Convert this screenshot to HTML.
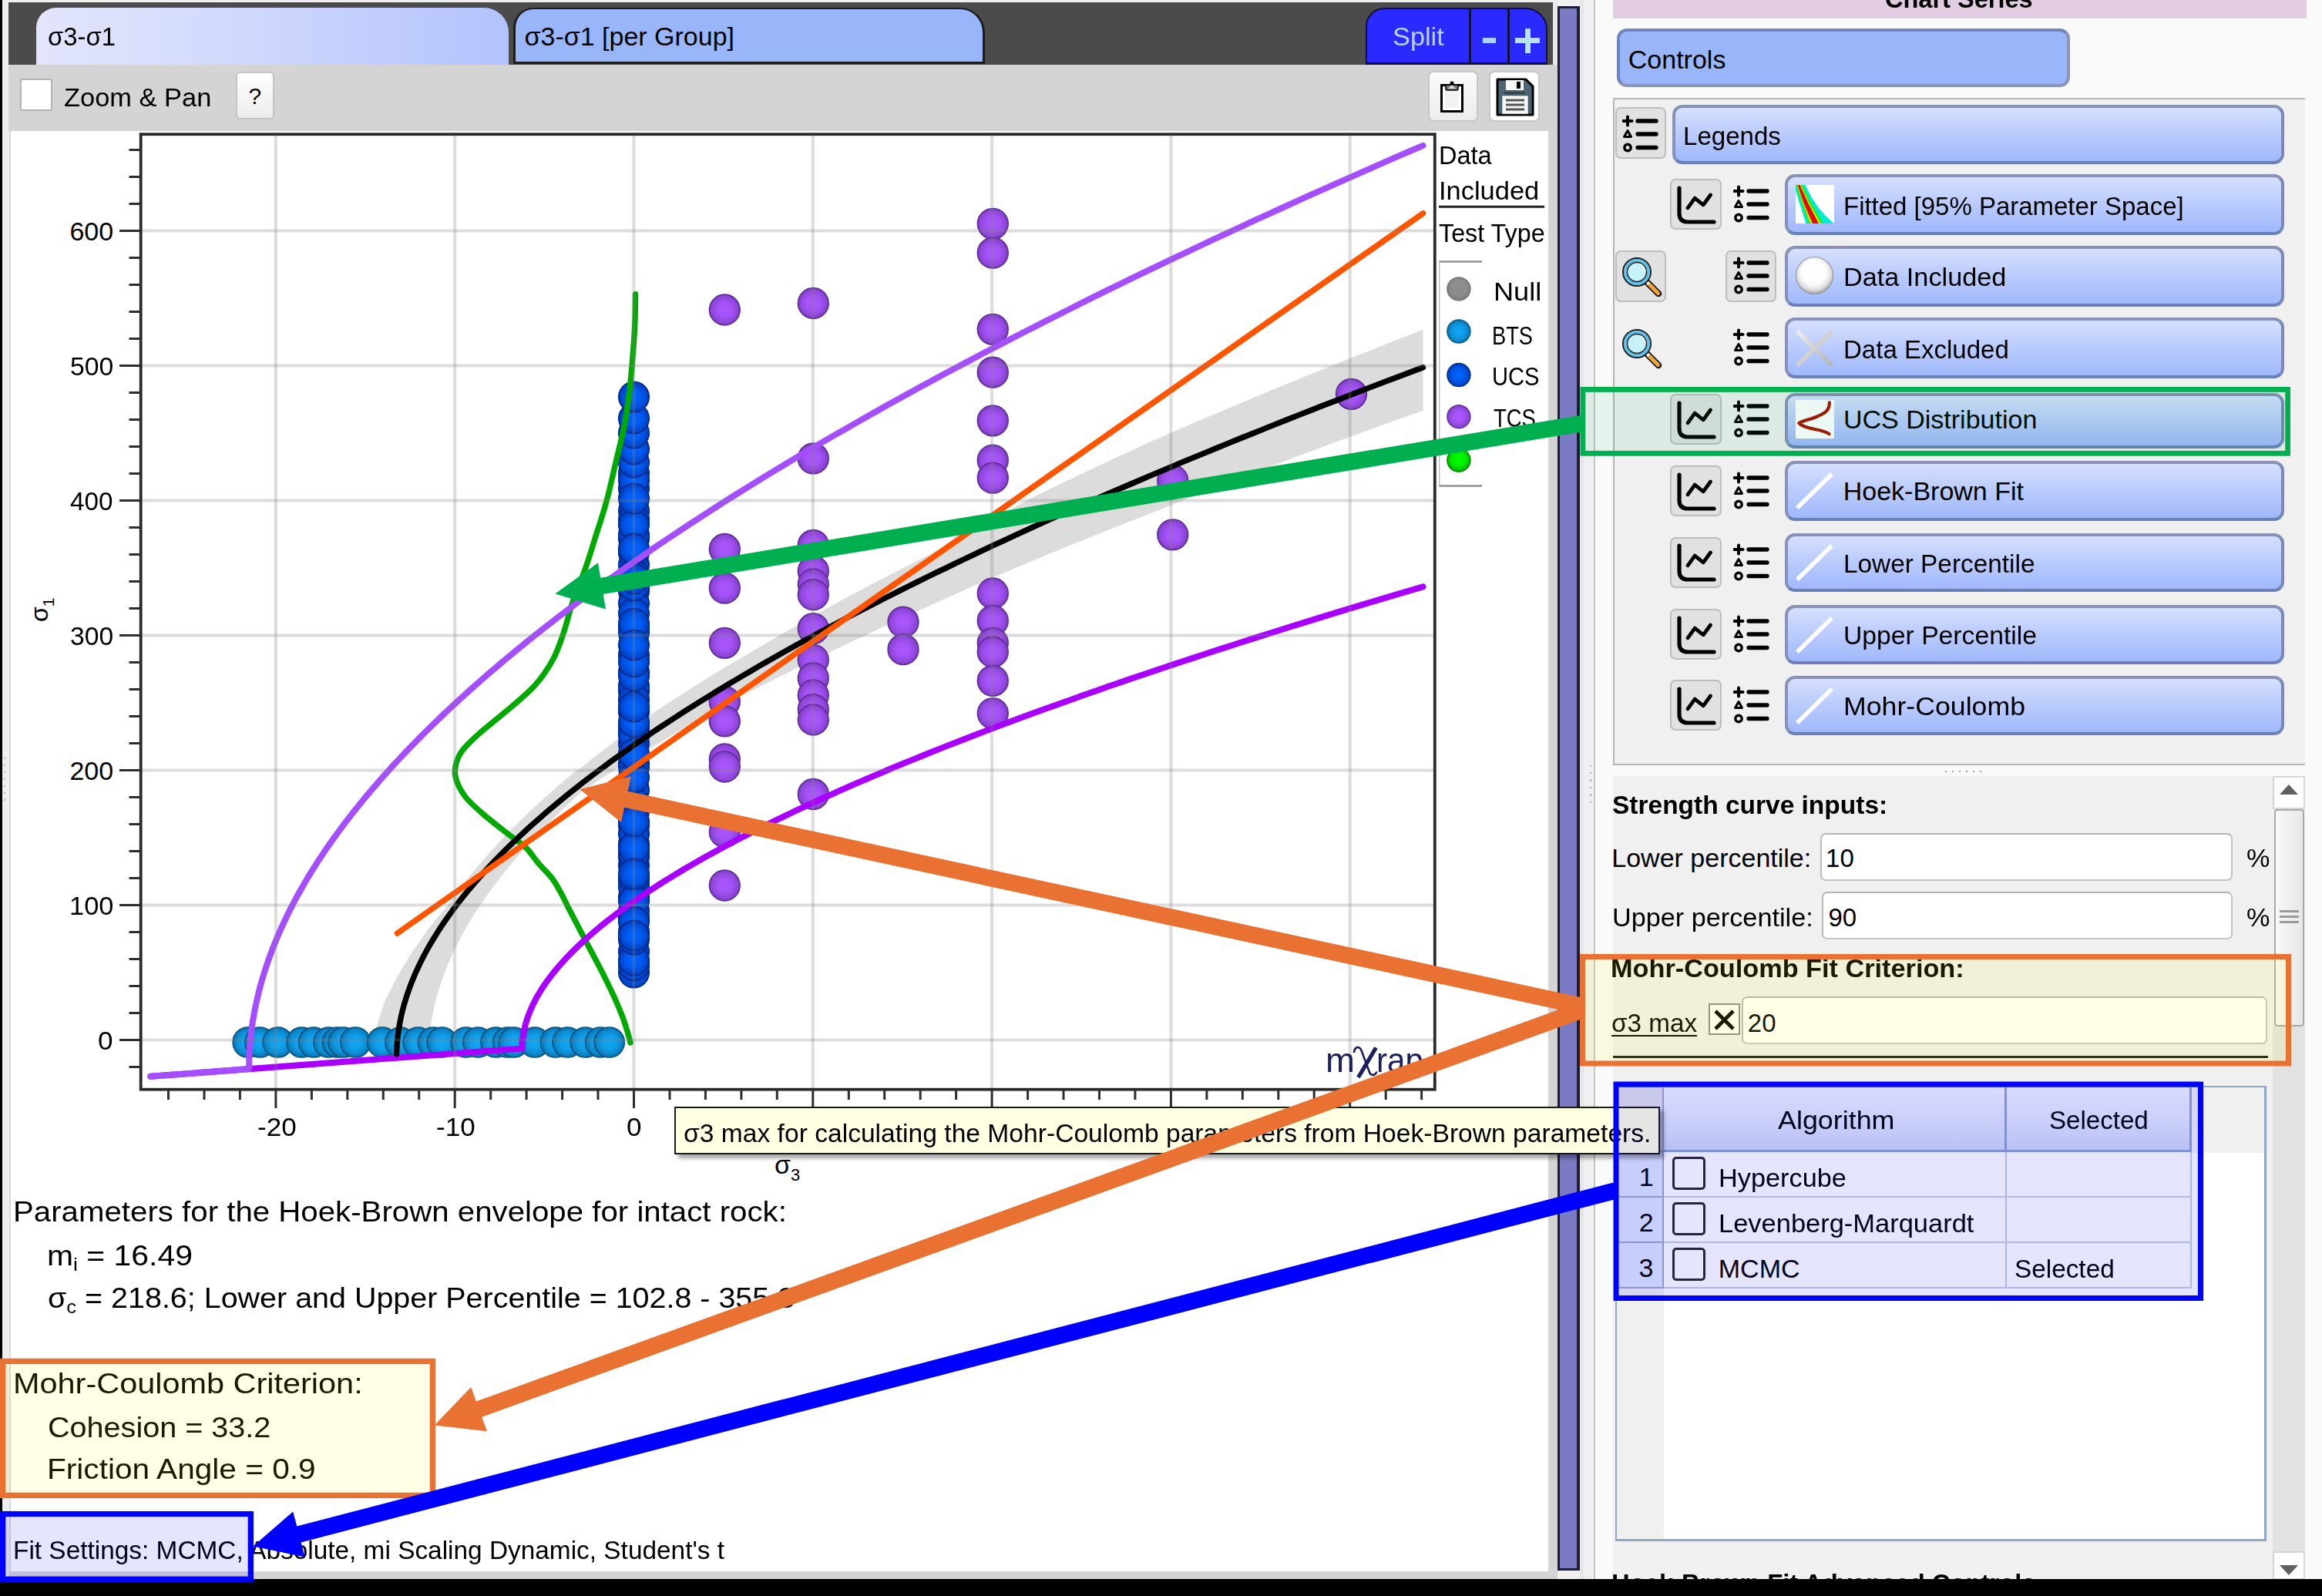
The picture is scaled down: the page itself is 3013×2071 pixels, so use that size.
<!DOCTYPE html>
<html><head><meta charset="utf-8"><title>mXrap</title>
<style>
html,body{margin:0;padding:0;background:#f0f0f0;}
body{width:3013px;height:2071px;overflow:hidden;position:relative;font-family:"Liberation Sans",sans-serif;}
.a{position:absolute;box-sizing:border-box;}
.t{position:absolute;white-space:nowrap;line-height:1;display:block;}
.bb{position:absolute;box-sizing:border-box;border:4px solid #8792b6;border-bottom-color:#6a80b8;border-right-color:#7888b8;border-radius:13px;background:linear-gradient(#d6e0fd,#bccdfd 45%,#a0b8fc);}
.gb{position:absolute;box-sizing:border-box;border:2px solid #bdbdbd;border-radius:7px;background:#e1e1e1;}
.inp{position:absolute;box-sizing:border-box;border:2px solid #c4c4c4;border-top-color:#b4b4b4;border-left-color:#bababa;border-radius:7px;background:#fff;}
</style></head><body>
<div class="a" style="left:0.0px;top:0.0px;width:3013.0px;height:2071.0px;background:#f0f0f0;"></div>
<div class="a" style="left:0.0px;top:0.0px;width:4.0px;height:2071.0px;background:#000;"></div>
<div class="a" style="left:3.0px;top:0.0px;width:12.5px;height:2049.0px;background:#efefef;border-right:4px solid #d8d8d8;"></div>
<div class="a" style="left:12.0px;top:0.0px;width:2003.0px;height:4.0px;background:#f0f0f0;"></div>
<div class="a" style="left:11.0px;top:3.0px;width:2004.0px;height:81.0px;background:#4b4b4b;"></div>
<div class="a" style="left:47.0px;top:10.0px;width:613.0px;height:74.0px;border-radius:26px 32px 0 0;background:linear-gradient(90deg,#e3e5fc,#cfd8fc 45%,#b2c2fc);"></div>
<span class="t" style="left:61.6px;transform-origin:0 0;top:30.2px;font-size:34px;color:#000;transform:scaleX(0.9659);">σ3-σ1</span>
<div class="a" style="left:666.0px;top:10.0px;width:612.0px;height:73.0px;border-radius:26px 32px 0 0;background:#9ab6fb;border:3px solid #1c1c1c;border-bottom:3px solid #1c1c1c;border-top-width:2px;"></div>
<span class="t" style="left:680.5px;transform-origin:0 0;top:30.2px;font-size:34px;color:#000;">σ3-σ1 [per Group]</span>
<div class="a" style="left:1772.0px;top:10.0px;width:236.0px;height:74.0px;border-radius:24px 28px 0 0;background:#2a2aff;border:2px solid #10103a;border-bottom-width:3px;"></div>
<div class="a" style="left:1906.0px;top:11.0px;width:3.0px;height:71.0px;background:#10103a;"></div>
<div class="a" style="left:1956.0px;top:11.0px;width:3.0px;height:71.0px;background:#10103a;"></div>
<span class="t" style="left:1807.4px;transform-origin:0 0;top:31.1px;font-size:33px;color:#b6d4f6;transform:scaleX(1.0400);">Split</span>
<div class="a" style="left:1924.0px;top:49.0px;width:17.0px;height:7.0px;background:#aad8f0;"></div>
<div class="a" style="left:1966.0px;top:49.0px;width:32.0px;height:7.0px;background:#b6e4ee;"></div>
<div class="a" style="left:1978.5px;top:36.5px;width:7.0px;height:32.0px;background:#b6e4ee;"></div>
<div class="a" style="left:11.0px;top:84.0px;width:2004.0px;height:87.0px;background:#d4d4d4;"></div>
<div class="a" style="left:26.0px;top:102.0px;width:42.0px;height:42.0px;background:#fff;border:2px solid #b4b4b4;border-radius:3px;"></div>
<span class="t" style="left:83.0px;transform-origin:0 0;top:110.1px;font-size:33px;color:#000;transform:scaleX(1.0430);">Zoom &amp; Pan</span>
<div class="a" style="left:306.0px;top:93.0px;width:50.0px;height:62.0px;border:2px solid #c4c4c4;border-radius:6px;background:linear-gradient(#fff,#ececec);"></div>
<span class="t" style="left:322.6px;transform-origin:0 0;top:109.6px;font-size:30px;color:#000;">?</span>
<div class="a" style="left:1853.0px;top:92.0px;width:65.0px;height:66.0px;border:2px solid #c6c6c6;border-radius:7px;background:linear-gradient(#fbfbfb,#ececec);"></div>
<div class="a" style="left:1932.0px;top:92.0px;width:66.0px;height:66.0px;border:2px solid #c6c6c6;border-radius:7px;background:#fff;"></div>
<svg class="a" style="left:1865px;top:102px" width="40" height="48" viewBox="0 0 40 48">
<rect x="5.5" y="8.5" width="27" height="34" fill="#fff" stroke="#000" stroke-width="3"/>
<rect x="10" y="13" width="18" height="25" fill="#f2f2f2"/>
<path d="M11,8 L11,13 Q11,15 13,15 L25,15 Q27,15 27,13 L27,8 Z" fill="#777" stroke="#000" stroke-width="1.5"/>
<path d="M14,13 L19,8 L24,13 Z" fill="#ddd"/>
<circle cx="19" cy="6" r="2.5" fill="#000"/>
</svg>
<svg class="a" style="left:1940px;top:100px" width="52" height="52" viewBox="0 0 52 52">
<path d="M3,3 L40,3 L49,12 L49,49 L3,49 Z" fill="#4d6675" stroke="#000" stroke-width="3" stroke-linejoin="round"/>
<rect x="14" y="4" width="23" height="13" fill="#f4f6f7"/>
<rect x="28" y="6" width="5" height="9" fill="#000"/>
<rect x="12" y="19" width="27" height="3" fill="#33454f"/>
<rect x="9" y="24" width="34" height="24" fill="#f4f6f7"/>
<rect x="9" y="24" width="34" height="24" fill="none" stroke="#2c3a42" stroke-width="1" opacity=".5"/>
<rect x="14" y="28.5" width="24" height="3" fill="#555"/>
<rect x="14" y="34.5" width="24" height="3" fill="#555"/>
<rect x="14" y="40.5" width="24" height="3" fill="#555"/>
</svg>
<div class="a" style="left:14.0px;top:170.0px;width:1995.0px;height:1869.0px;background:#fff;"></div>
<div class="a" style="left:11.0px;top:2039.0px;width:2004.0px;height:10.0px;background:#d4d4d4;"></div>
<div class="a" style="left:2015.0px;top:3.0px;width:6.0px;height:81.0px;background:#e8e8e8;"></div>
<div class="a" style="left:2009.0px;top:84.0px;width:12.0px;height:1965.0px;background:#d4d4d4;"></div>
<div class="a" style="left:2021.0px;top:8.0px;width:29.0px;height:2030.0px;background:#7b7bc3;border:3px solid #1c1c3a;border-left-width:3px;border-right-width:4px;"></div>
<div class="a" style="left:2050.0px;top:0.0px;width:5.0px;height:2049.0px;background:#e6e6e6;"></div>
<div class="a" style="left:2068.0px;top:0.0px;width:2.0px;height:2049.0px;background:#c4c4c4;"></div>
<div class="a" style="left:2070.0px;top:0.0px;width:943.0px;height:2049.0px;background:#fafafa;"></div>
<svg class="a" style="left:0;top:0" width="2013" height="1560" viewBox="0 0 2013 1560">
<defs>
<radialGradient id="gT" cx="50%" cy="50%" r="50%"><stop offset="0" stop-color="#aa57ff"/><stop offset="0.45" stop-color="#a453f6"/><stop offset="0.8" stop-color="#9147dc"/><stop offset="1" stop-color="#7a3abf"/></radialGradient>
<radialGradient id="gU" cx="50%" cy="50%" r="50%"><stop offset="0" stop-color="#0064ff"/><stop offset="0.45" stop-color="#005cf4"/><stop offset="0.8" stop-color="#004ad4"/><stop offset="1" stop-color="#0038b0"/></radialGradient>
<radialGradient id="gB" cx="50%" cy="50%" r="50%"><stop offset="0" stop-color="#10a8f6"/><stop offset="0.45" stop-color="#0f9fea"/><stop offset="0.8" stop-color="#0c88cc"/><stop offset="1" stop-color="#0a6ca8"/></radialGradient>
<radialGradient id="gN" cx="50%" cy="45%" r="55%"><stop offset="0" stop-color="#8e8e8e"/><stop offset="0.6" stop-color="#8c8c8c"/><stop offset="1" stop-color="#7c7c7c"/></radialGradient>
<radialGradient id="gG" cx="50%" cy="45%" r="55%"><stop offset="0" stop-color="#00ff00"/><stop offset="0.55" stop-color="#00f000"/><stop offset="1" stop-color="#00a800"/></radialGradient>
<clipPath id="cp"><rect x="184" y="176" width="1676" height="1236"/></clipPath>
</defs>
<rect x="182.7" y="174.2" width="1679.1" height="1239.5" fill="#fff"/>
<g clip-path="url(#cp)">
<polygon points="486.0,1352.0 488.5,1331.4 499.0,1300.0 514.0,1270.0 533.0,1238.0 556.0,1205.0 583.2,1172.1 587.1,1166.5 591.1,1160.9 595.2,1155.3 599.4,1149.7 603.8,1144.1 608.2,1138.5 612.7,1132.9 617.4,1127.3 622.1,1121.6 627.0,1116.0 631.9,1110.3 637.0,1104.7 642.1,1099.0 647.4,1093.3 652.8,1087.6 658.2,1081.9 663.8,1076.2 669.5,1070.5 675.3,1064.8 681.2,1059.1 687.2,1053.3 693.3,1047.6 699.5,1041.9 705.8,1036.1 712.2,1030.3 718.7,1024.6 725.3,1018.8 732.1,1013.0 738.9,1007.2 745.8,1001.4 752.8,997.3 761.9,989.9 771.0,982.6 780.2,975.4 789.3,968.4 798.4,961.4 807.5,954.5 816.6,947.8 825.7,941.1 834.8,934.5 843.9,928.0 853.1,921.6 862.2,915.6 871.3,909.6 880.4,903.7 889.5,897.9 898.6,892.1 907.7,886.4 916.9,880.7 926.0,875.1 935.1,869.6 944.2,864.1 953.3,858.7 962.4,853.3 971.5,847.9 980.7,842.6 989.8,837.2 998.9,831.8 1008.0,826.5 1017.1,821.2 1026.2,815.9 1035.3,810.7 1044.5,805.5 1053.6,800.3 1062.7,795.2 1071.8,790.1 1080.9,785.1 1090.0,780.1 1099.1,775.1 1108.3,770.3 1117.4,765.4 1126.5,760.6 1135.6,755.9 1144.7,751.1 1153.8,746.4 1162.9,741.7 1172.0,737.1 1181.2,732.4 1190.3,727.8 1199.4,723.3 1208.5,718.7 1217.6,713.6 1226.7,708.4 1235.8,703.2 1245.0,698.0 1254.1,692.9 1263.2,687.7 1272.3,682.6 1281.4,677.5 1290.5,672.5 1299.6,667.4 1308.8,662.4 1317.9,657.4 1327.0,652.4 1336.1,647.5 1345.2,642.8 1354.3,638.4 1363.4,634.0 1372.6,629.6 1381.7,625.2 1390.8,620.9 1399.9,616.5 1409.0,612.2 1418.1,607.9 1427.2,603.6 1436.4,599.4 1445.5,595.1 1454.6,590.9 1463.7,586.7 1472.8,582.5 1481.9,578.3 1491.0,574.1 1500.2,570.0 1509.3,566.0 1518.4,562.0 1527.5,558.1 1536.6,554.2 1545.7,550.2 1554.8,546.3 1563.9,542.5 1573.1,538.6 1582.2,534.7 1591.3,530.9 1600.4,527.0 1609.5,523.2 1618.6,519.4 1627.7,515.6 1636.9,511.8 1646.0,508.0 1655.1,504.3 1664.2,500.5 1673.3,496.8 1682.4,493.1 1691.5,489.3 1700.7,485.6 1709.8,481.9 1718.9,478.3 1728.0,474.6 1737.1,470.9 1746.2,467.3 1755.3,463.6 1764.5,460.0 1773.6,456.4 1782.7,452.8 1791.8,449.2 1800.9,445.6 1810.0,442.0 1819.1,438.4 1828.3,434.9 1837.4,431.3 1846.5,427.8 1846.5,532.8 1837.4,536.0 1828.3,539.3 1819.1,542.5 1810.0,545.8 1800.9,549.1 1791.8,552.3 1782.7,555.6 1773.6,558.9 1764.5,562.3 1755.3,565.6 1746.2,568.9 1737.1,572.3 1728.0,575.6 1718.9,579.0 1709.8,582.4 1700.7,585.8 1691.5,589.2 1682.4,592.6 1673.3,596.0 1664.2,599.4 1655.1,602.9 1646.0,606.4 1636.9,609.8 1627.7,613.3 1618.6,616.8 1609.5,620.3 1600.4,623.8 1591.3,627.4 1582.2,630.9 1573.1,634.5 1563.9,638.0 1554.8,641.6 1545.7,645.2 1536.6,648.8 1527.5,652.5 1518.4,656.1 1509.3,659.8 1500.2,663.4 1491.0,667.0 1481.9,670.5 1472.8,674.1 1463.7,677.6 1454.6,681.2 1445.5,684.8 1436.4,688.4 1427.2,692.1 1418.1,695.7 1409.0,699.4 1399.9,703.1 1390.8,706.8 1381.7,710.5 1372.6,714.2 1363.4,718.0 1354.3,721.8 1345.2,725.6 1336.1,729.4 1327.0,733.2 1317.9,737.1 1308.8,740.9 1299.6,744.8 1290.5,748.7 1281.4,752.7 1272.3,756.6 1263.2,760.6 1254.1,764.6 1245.0,768.6 1235.8,772.7 1226.7,776.7 1217.6,780.8 1208.5,784.9 1199.4,789.0 1190.3,793.1 1181.2,797.2 1172.0,801.4 1162.9,805.6 1153.8,809.8 1144.7,814.0 1135.6,818.3 1126.5,822.6 1117.4,826.9 1108.3,831.3 1099.1,835.6 1090.0,839.9 1080.9,844.2 1071.8,848.5 1062.7,852.9 1053.6,857.3 1044.5,861.7 1035.3,866.2 1026.2,870.7 1017.1,875.2 1008.0,879.8 998.9,884.4 989.8,889.1 980.7,893.8 971.5,898.5 962.4,903.4 953.3,908.2 944.2,913.1 935.1,918.1 926.0,923.1 916.9,928.2 907.7,933.3 898.6,938.5 889.5,943.7 880.4,949.1 871.3,954.4 862.2,959.9 853.1,965.4 843.9,970.8 834.8,976.2 825.7,981.7 816.6,987.2 807.5,992.8 798.4,998.6 789.3,1004.4 780.2,1010.3 771.0,1016.4 761.9,1022.5 752.8,1028.8 750.0,1031.6 743.8,1037.3 737.7,1043.0 731.7,1048.6 725.8,1054.3 720.0,1059.9 714.3,1065.6 708.7,1071.2 703.2,1076.9 697.8,1082.5 692.6,1088.1 687.4,1093.7 682.3,1099.3 677.3,1104.9 672.4,1110.5 667.6,1116.0 662.9,1121.6 658.3,1127.2 653.8,1132.7 649.5,1138.3 645.2,1143.8 641.0,1149.3 636.9,1154.9 632.9,1160.4 629.1,1165.9 625.3,1171.4 621.6,1176.9 618.0,1182.4 614.5,1187.8 611.2,1193.3 607.9,1198.8 604.7,1204.2 601.6,1209.7 598.7,1215.1 595.8,1220.5 593.0,1226.0 590.3,1231.4 587.8,1236.8 585.3,1242.2 582.9,1247.6 580.7,1253.0 578.5,1258.4 576.4,1263.7 574.5,1269.1 572.6,1274.4 570.8,1279.8 569.2,1285.1 567.6,1290.5 566.2,1295.8 564.8,1301.1 563.5,1306.4 562.4,1311.7 561.3,1317.0 560.4,1322.3 559.5,1327.6 558.7,1332.9 558.1,1338.1 557.5,1343.4 557.1,1348.6 556.7,1353.9 556.5,1359.1 556.3,1364.3 556.3,1369.6" fill="#dcdcdc"/>
<circle cx="321.7" cy="1352.5" r="19.6" fill="url(#gB)" stroke="#0a527e" stroke-width="1.5"/>
<circle cx="337.2" cy="1352.5" r="19.6" fill="url(#gB)" stroke="#0a527e" stroke-width="1.5"/>
<circle cx="360.5" cy="1352.5" r="19.6" fill="url(#gB)" stroke="#0a527e" stroke-width="1.5"/>
<circle cx="391.5" cy="1352.5" r="19.6" fill="url(#gB)" stroke="#0a527e" stroke-width="1.5"/>
<circle cx="407.0" cy="1352.5" r="19.6" fill="url(#gB)" stroke="#0a527e" stroke-width="1.5"/>
<circle cx="426.4" cy="1352.5" r="19.6" fill="url(#gB)" stroke="#0a527e" stroke-width="1.5"/>
<circle cx="438.0" cy="1352.5" r="19.6" fill="url(#gB)" stroke="#0a527e" stroke-width="1.5"/>
<circle cx="445.7" cy="1352.5" r="19.6" fill="url(#gB)" stroke="#0a527e" stroke-width="1.5"/>
<circle cx="461.2" cy="1352.5" r="19.6" fill="url(#gB)" stroke="#0a527e" stroke-width="1.5"/>
<circle cx="496.1" cy="1352.5" r="19.6" fill="url(#gB)" stroke="#0a527e" stroke-width="1.5"/>
<circle cx="519.4" cy="1352.5" r="19.6" fill="url(#gB)" stroke="#0a527e" stroke-width="1.5"/>
<circle cx="542.6" cy="1352.5" r="19.6" fill="url(#gB)" stroke="#0a527e" stroke-width="1.5"/>
<circle cx="562.0" cy="1352.5" r="19.6" fill="url(#gB)" stroke="#0a527e" stroke-width="1.5"/>
<circle cx="573.6" cy="1352.5" r="19.6" fill="url(#gB)" stroke="#0a527e" stroke-width="1.5"/>
<circle cx="604.7" cy="1352.5" r="19.6" fill="url(#gB)" stroke="#0a527e" stroke-width="1.5"/>
<circle cx="620.2" cy="1352.5" r="19.6" fill="url(#gB)" stroke="#0a527e" stroke-width="1.5"/>
<circle cx="643.4" cy="1352.5" r="19.6" fill="url(#gB)" stroke="#0a527e" stroke-width="1.5"/>
<circle cx="658.9" cy="1352.5" r="19.6" fill="url(#gB)" stroke="#0a527e" stroke-width="1.5"/>
<circle cx="666.7" cy="1352.5" r="19.6" fill="url(#gB)" stroke="#0a527e" stroke-width="1.5"/>
<circle cx="693.8" cy="1352.5" r="19.6" fill="url(#gB)" stroke="#0a527e" stroke-width="1.5"/>
<circle cx="720.9" cy="1352.5" r="19.6" fill="url(#gB)" stroke="#0a527e" stroke-width="1.5"/>
<circle cx="736.4" cy="1352.5" r="19.6" fill="url(#gB)" stroke="#0a527e" stroke-width="1.5"/>
<circle cx="759.7" cy="1352.5" r="19.6" fill="url(#gB)" stroke="#0a527e" stroke-width="1.5"/>
<circle cx="779.1" cy="1352.5" r="19.6" fill="url(#gB)" stroke="#0a527e" stroke-width="1.5"/>
<circle cx="790.7" cy="1352.5" r="19.6" fill="url(#gB)" stroke="#0a527e" stroke-width="1.5"/>
<circle cx="822.5" cy="767.0" r="19.8" fill="url(#gU)" stroke="#00288a" stroke-width="1.5"/>
<circle cx="822.5" cy="1123.0" r="19.8" fill="url(#gU)" stroke="#00288a" stroke-width="1.5"/>
<circle cx="822.5" cy="1235.0" r="19.8" fill="url(#gU)" stroke="#00288a" stroke-width="1.5"/>
<circle cx="822.5" cy="733.0" r="19.8" fill="url(#gU)" stroke="#00288a" stroke-width="1.5"/>
<circle cx="822.5" cy="1209.0" r="19.8" fill="url(#gU)" stroke="#00288a" stroke-width="1.5"/>
<circle cx="822.5" cy="1025.0" r="19.8" fill="url(#gU)" stroke="#00288a" stroke-width="1.5"/>
<circle cx="822.5" cy="850.0" r="19.8" fill="url(#gU)" stroke="#00288a" stroke-width="1.5"/>
<circle cx="822.5" cy="717.0" r="19.8" fill="url(#gU)" stroke="#00288a" stroke-width="1.5"/>
<circle cx="822.5" cy="1144.0" r="19.8" fill="url(#gU)" stroke="#00288a" stroke-width="1.5"/>
<circle cx="822.5" cy="663.0" r="19.8" fill="url(#gU)" stroke="#00288a" stroke-width="1.5"/>
<circle cx="822.5" cy="1112.0" r="19.8" fill="url(#gU)" stroke="#00288a" stroke-width="1.5"/>
<circle cx="822.5" cy="1053.0" r="19.8" fill="url(#gU)" stroke="#00288a" stroke-width="1.5"/>
<circle cx="822.5" cy="699.0" r="19.8" fill="url(#gU)" stroke="#00288a" stroke-width="1.5"/>
<circle cx="822.5" cy="814.0" r="19.8" fill="url(#gU)" stroke="#00288a" stroke-width="1.5"/>
<circle cx="822.5" cy="1262.0" r="19.8" fill="url(#gU)" stroke="#00288a" stroke-width="1.5"/>
<circle cx="822.5" cy="1164.0" r="19.8" fill="url(#gU)" stroke="#00288a" stroke-width="1.5"/>
<circle cx="822.5" cy="1151.0" r="19.8" fill="url(#gU)" stroke="#00288a" stroke-width="1.5"/>
<circle cx="822.5" cy="1048.0" r="19.8" fill="url(#gU)" stroke="#00288a" stroke-width="1.5"/>
<circle cx="822.5" cy="1139.0" r="19.8" fill="url(#gU)" stroke="#00288a" stroke-width="1.5"/>
<circle cx="822.5" cy="783.0" r="19.8" fill="url(#gU)" stroke="#00288a" stroke-width="1.5"/>
<circle cx="822.5" cy="924.0" r="19.8" fill="url(#gU)" stroke="#00288a" stroke-width="1.5"/>
<circle cx="822.5" cy="872.0" r="19.8" fill="url(#gU)" stroke="#00288a" stroke-width="1.5"/>
<circle cx="822.5" cy="991.0" r="19.8" fill="url(#gU)" stroke="#00288a" stroke-width="1.5"/>
<circle cx="822.5" cy="1253.0" r="19.8" fill="url(#gU)" stroke="#00288a" stroke-width="1.5"/>
<circle cx="822.5" cy="821.0" r="19.8" fill="url(#gU)" stroke="#00288a" stroke-width="1.5"/>
<circle cx="822.5" cy="796.0" r="19.8" fill="url(#gU)" stroke="#00288a" stroke-width="1.5"/>
<circle cx="822.5" cy="949.0" r="19.8" fill="url(#gU)" stroke="#00288a" stroke-width="1.5"/>
<circle cx="822.5" cy="694.0" r="19.8" fill="url(#gU)" stroke="#00288a" stroke-width="1.5"/>
<circle cx="822.5" cy="1191.0" r="19.8" fill="url(#gU)" stroke="#00288a" stroke-width="1.5"/>
<circle cx="822.5" cy="897.0" r="19.8" fill="url(#gU)" stroke="#00288a" stroke-width="1.5"/>
<circle cx="822.5" cy="890.0" r="19.8" fill="url(#gU)" stroke="#00288a" stroke-width="1.5"/>
<circle cx="822.5" cy="908.0" r="19.8" fill="url(#gU)" stroke="#00288a" stroke-width="1.5"/>
<circle cx="822.5" cy="996.0" r="19.8" fill="url(#gU)" stroke="#00288a" stroke-width="1.5"/>
<circle cx="822.5" cy="877.0" r="19.8" fill="url(#gU)" stroke="#00288a" stroke-width="1.5"/>
<circle cx="822.5" cy="1071.0" r="19.8" fill="url(#gU)" stroke="#00288a" stroke-width="1.5"/>
<circle cx="822.5" cy="674.0" r="19.8" fill="url(#gU)" stroke="#00288a" stroke-width="1.5"/>
<circle cx="822.5" cy="1095.0" r="19.8" fill="url(#gU)" stroke="#00288a" stroke-width="1.5"/>
<circle cx="822.5" cy="614.0" r="19.8" fill="url(#gU)" stroke="#00288a" stroke-width="1.5"/>
<circle cx="822.5" cy="942.0" r="19.8" fill="url(#gU)" stroke="#00288a" stroke-width="1.5"/>
<circle cx="822.5" cy="681.0" r="19.8" fill="url(#gU)" stroke="#00288a" stroke-width="1.5"/>
<circle cx="822.5" cy="1246.0" r="19.8" fill="url(#gU)" stroke="#00288a" stroke-width="1.5"/>
<circle cx="822.5" cy="760.0" r="19.8" fill="url(#gU)" stroke="#00288a" stroke-width="1.5"/>
<circle cx="822.5" cy="746.0" r="19.8" fill="url(#gU)" stroke="#00288a" stroke-width="1.5"/>
<circle cx="822.5" cy="1182.0" r="19.8" fill="url(#gU)" stroke="#00288a" stroke-width="1.5"/>
<circle cx="822.5" cy="751.0" r="19.8" fill="url(#gU)" stroke="#00288a" stroke-width="1.5"/>
<circle cx="822.5" cy="1169.0" r="19.8" fill="url(#gU)" stroke="#00288a" stroke-width="1.5"/>
<circle cx="822.5" cy="1041.0" r="19.8" fill="url(#gU)" stroke="#00288a" stroke-width="1.5"/>
<circle cx="822.5" cy="965.0" r="19.8" fill="url(#gU)" stroke="#00288a" stroke-width="1.5"/>
<circle cx="822.5" cy="1196.0" r="19.8" fill="url(#gU)" stroke="#00288a" stroke-width="1.5"/>
<circle cx="822.5" cy="1219.0" r="19.8" fill="url(#gU)" stroke="#00288a" stroke-width="1.5"/>
<circle cx="822.5" cy="634.0" r="19.8" fill="url(#gU)" stroke="#00288a" stroke-width="1.5"/>
<circle cx="822.5" cy="1107.0" r="19.8" fill="url(#gU)" stroke="#00288a" stroke-width="1.5"/>
<circle cx="822.5" cy="1009.0" r="19.8" fill="url(#gU)" stroke="#00288a" stroke-width="1.5"/>
<circle cx="822.5" cy="623.0" r="19.8" fill="url(#gU)" stroke="#00288a" stroke-width="1.5"/>
<circle cx="822.5" cy="1082.0" r="19.8" fill="url(#gU)" stroke="#00288a" stroke-width="1.5"/>
<circle cx="822.5" cy="647.0" r="19.8" fill="url(#gU)" stroke="#00288a" stroke-width="1.5"/>
<circle cx="822.5" cy="954.0" r="19.8" fill="url(#gU)" stroke="#00288a" stroke-width="1.5"/>
<circle cx="822.5" cy="1100.0" r="19.8" fill="url(#gU)" stroke="#00288a" stroke-width="1.5"/>
<circle cx="822.5" cy="937.0" r="19.8" fill="url(#gU)" stroke="#00288a" stroke-width="1.5"/>
<circle cx="822.5" cy="1214.0" r="19.8" fill="url(#gU)" stroke="#00288a" stroke-width="1.5"/>
<circle cx="822.5" cy="1134.0" r="19.8" fill="url(#gU)" stroke="#00288a" stroke-width="1.5"/>
<circle cx="822.5" cy="809.0" r="19.8" fill="url(#gU)" stroke="#00288a" stroke-width="1.5"/>
<circle cx="822.5" cy="859.0" r="19.8" fill="url(#gU)" stroke="#00288a" stroke-width="1.5"/>
<circle cx="822.5" cy="1066.0" r="19.8" fill="url(#gU)" stroke="#00288a" stroke-width="1.5"/>
<circle cx="822.5" cy="978.0" r="19.8" fill="url(#gU)" stroke="#00288a" stroke-width="1.5"/>
<circle cx="822.5" cy="917.0" r="19.8" fill="url(#gU)" stroke="#00288a" stroke-width="1.5"/>
<circle cx="822.5" cy="837.0" r="19.8" fill="url(#gU)" stroke="#00288a" stroke-width="1.5"/>
<circle cx="822.5" cy="712.0" r="19.8" fill="url(#gU)" stroke="#00288a" stroke-width="1.5"/>
<circle cx="822.5" cy="600.0" r="19.8" fill="url(#gU)" stroke="#00288a" stroke-width="1.5"/>
<circle cx="822.5" cy="583.0" r="19.8" fill="url(#gU)" stroke="#00288a" stroke-width="1.5"/>
<circle cx="822.5" cy="562.0" r="19.8" fill="url(#gU)" stroke="#00288a" stroke-width="1.5"/>
<circle cx="822.5" cy="543.0" r="19.8" fill="url(#gU)" stroke="#00288a" stroke-width="1.5"/>
<circle cx="822.5" cy="515.0" r="19.8" fill="url(#gU)" stroke="#00288a" stroke-width="1.5"/>
<circle cx="940.3" cy="402.0" r="19.9" fill="url(#gT)" stroke="#5c2c94" stroke-width="1.5"/>
<circle cx="940.3" cy="712.5" r="19.9" fill="url(#gT)" stroke="#5c2c94" stroke-width="1.5"/>
<circle cx="940.3" cy="763.2" r="19.9" fill="url(#gT)" stroke="#5c2c94" stroke-width="1.5"/>
<circle cx="940.3" cy="834.3" r="19.9" fill="url(#gT)" stroke="#5c2c94" stroke-width="1.5"/>
<circle cx="940.3" cy="910.4" r="19.9" fill="url(#gT)" stroke="#5c2c94" stroke-width="1.5"/>
<circle cx="940.3" cy="935.8" r="19.9" fill="url(#gT)" stroke="#5c2c94" stroke-width="1.5"/>
<circle cx="940.3" cy="985.0" r="19.9" fill="url(#gT)" stroke="#5c2c94" stroke-width="1.5"/>
<circle cx="940.3" cy="995.0" r="19.9" fill="url(#gT)" stroke="#5c2c94" stroke-width="1.5"/>
<circle cx="940.3" cy="1079.6" r="19.9" fill="url(#gT)" stroke="#5c2c94" stroke-width="1.5"/>
<circle cx="940.3" cy="1149.0" r="19.9" fill="url(#gT)" stroke="#5c2c94" stroke-width="1.5"/>
<circle cx="1055.3" cy="393.5" r="19.9" fill="url(#gT)" stroke="#5c2c94" stroke-width="1.5"/>
<circle cx="1055.3" cy="594.9" r="19.9" fill="url(#gT)" stroke="#5c2c94" stroke-width="1.5"/>
<circle cx="1055.3" cy="707.4" r="19.9" fill="url(#gT)" stroke="#5c2c94" stroke-width="1.5"/>
<circle cx="1055.3" cy="741.2" r="19.9" fill="url(#gT)" stroke="#5c2c94" stroke-width="1.5"/>
<circle cx="1055.3" cy="758.0" r="19.9" fill="url(#gT)" stroke="#5c2c94" stroke-width="1.5"/>
<circle cx="1055.3" cy="771.7" r="19.9" fill="url(#gT)" stroke="#5c2c94" stroke-width="1.5"/>
<circle cx="1055.3" cy="815.7" r="19.9" fill="url(#gT)" stroke="#5c2c94" stroke-width="1.5"/>
<circle cx="1055.3" cy="856.3" r="19.9" fill="url(#gT)" stroke="#5c2c94" stroke-width="1.5"/>
<circle cx="1055.3" cy="880.0" r="19.9" fill="url(#gT)" stroke="#5c2c94" stroke-width="1.5"/>
<circle cx="1055.3" cy="902.0" r="19.9" fill="url(#gT)" stroke="#5c2c94" stroke-width="1.5"/>
<circle cx="1055.3" cy="920.6" r="19.9" fill="url(#gT)" stroke="#5c2c94" stroke-width="1.5"/>
<circle cx="1055.3" cy="934.0" r="19.9" fill="url(#gT)" stroke="#5c2c94" stroke-width="1.5"/>
<circle cx="1055.3" cy="1030.5" r="19.9" fill="url(#gT)" stroke="#5c2c94" stroke-width="1.5"/>
<circle cx="1172.0" cy="807.2" r="19.9" fill="url(#gT)" stroke="#5c2c94" stroke-width="1.5"/>
<circle cx="1172.0" cy="842.7" r="19.9" fill="url(#gT)" stroke="#5c2c94" stroke-width="1.5"/>
<circle cx="1288.3" cy="290.3" r="19.9" fill="url(#gT)" stroke="#5c2c94" stroke-width="1.5"/>
<circle cx="1288.3" cy="328.2" r="19.9" fill="url(#gT)" stroke="#5c2c94" stroke-width="1.5"/>
<circle cx="1288.3" cy="427.3" r="19.9" fill="url(#gT)" stroke="#5c2c94" stroke-width="1.5"/>
<circle cx="1288.3" cy="483.2" r="19.9" fill="url(#gT)" stroke="#5c2c94" stroke-width="1.5"/>
<circle cx="1288.3" cy="545.8" r="19.9" fill="url(#gT)" stroke="#5c2c94" stroke-width="1.5"/>
<circle cx="1288.3" cy="597.2" r="19.9" fill="url(#gT)" stroke="#5c2c94" stroke-width="1.5"/>
<circle cx="1288.3" cy="620.2" r="19.9" fill="url(#gT)" stroke="#5c2c94" stroke-width="1.5"/>
<circle cx="1288.3" cy="770.0" r="19.9" fill="url(#gT)" stroke="#5c2c94" stroke-width="1.5"/>
<circle cx="1288.3" cy="805.5" r="19.9" fill="url(#gT)" stroke="#5c2c94" stroke-width="1.5"/>
<circle cx="1288.3" cy="834.3" r="19.9" fill="url(#gT)" stroke="#5c2c94" stroke-width="1.5"/>
<circle cx="1288.3" cy="846.0" r="19.9" fill="url(#gT)" stroke="#5c2c94" stroke-width="1.5"/>
<circle cx="1288.3" cy="883.4" r="19.9" fill="url(#gT)" stroke="#5c2c94" stroke-width="1.5"/>
<circle cx="1288.3" cy="925.6" r="19.9" fill="url(#gT)" stroke="#5c2c94" stroke-width="1.5"/>
<circle cx="1521.7" cy="623.6" r="19.9" fill="url(#gT)" stroke="#5c2c94" stroke-width="1.5"/>
<circle cx="1521.7" cy="693.8" r="19.9" fill="url(#gT)" stroke="#5c2c94" stroke-width="1.5"/>
<circle cx="1753.5" cy="511.3" r="19.9" fill="url(#gT)" stroke="#5c2c94" stroke-width="1.5"/>
<path d="M818.0,1353.0 C817.4,1350.8 816.2,1345.5 814.5,1340.0 C812.8,1334.5 810.8,1327.3 808.0,1320.0 C805.2,1312.7 802.5,1306.0 798.0,1296.0 C793.5,1286.0 787.1,1272.9 780.7,1260.3 C774.3,1247.7 766.6,1233.6 759.6,1220.2 C752.6,1206.8 743.8,1190.0 738.6,1180.0 C733.4,1170.0 732.3,1166.7 728.6,1160.0 C724.9,1153.3 721.6,1146.7 716.6,1140.0 C711.6,1133.3 704.2,1126.7 698.5,1120.0 C692.8,1113.3 688.9,1106.2 682.5,1100.0 C676.1,1093.8 669.3,1090.1 659.9,1082.7 C650.5,1075.3 635.6,1064.0 626.0,1055.6 C616.4,1047.1 608.3,1040.5 602.4,1032.0 C596.5,1023.5 591.4,1013.9 590.5,1004.9 C589.6,995.9 592.5,986.3 597.3,977.8 C602.1,969.3 608.9,963.7 619.3,954.1 C629.7,944.5 647.5,931.0 659.9,920.3 C672.3,909.6 684.1,900.5 693.7,889.8 C703.3,879.1 711.2,867.3 717.4,856.0 C723.6,844.7 726.7,834.5 731.0,822.1 C735.3,809.7 738.1,796.0 743.0,781.5 C747.9,767.0 755.8,748.5 760.5,735.0 C765.2,721.5 767.1,714.6 771.5,700.5 C775.9,686.4 782.4,667.1 787.0,650.4 C791.6,633.6 795.1,616.7 799.0,600.0 C802.9,583.3 807.4,566.7 810.5,550.0 C813.6,533.3 815.7,516.7 817.6,500.0 C819.5,483.3 820.9,464.2 822.0,450.0 C823.1,435.8 823.6,426.4 824.0,415.0 C824.4,403.6 824.4,387.2 824.5,381.7" fill="none" stroke="#00aa00" stroke-width="7.4" stroke-linecap="round"/>
<polyline points="195.3,1396.8 677.7,1360.4 677.7,1357.2 677.9,1354.0 678.1,1350.8 678.4,1347.6 678.8,1344.4 679.3,1341.1 679.9,1337.9 680.6,1334.6 681.4,1331.4 682.2,1328.1 683.2,1324.9 684.3,1321.6 685.4,1318.3 686.6,1315.0 688.0,1311.7 689.4,1308.4 690.9,1305.1 692.5,1301.8 694.2,1298.5 695.9,1295.1 697.8,1291.8 699.8,1288.5 701.8,1285.1 704.0,1281.8 706.2,1278.4 708.5,1275.0 711.0,1271.7 713.5,1268.3 716.1,1264.9 718.8,1261.5 721.6,1258.1 724.4,1254.7 727.4,1251.3 730.5,1247.8 733.6,1244.4 736.9,1241.0 740.2,1237.5 743.6,1234.1 747.1,1230.6 750.7,1227.1 754.4,1223.7 758.2,1220.2 762.1,1216.7 766.1,1213.2 770.1,1209.7 774.3,1206.2 778.5,1202.7 782.9,1199.2 787.3,1195.6 791.8,1192.1 796.4,1188.6 801.1,1185.0 805.9,1181.5 810.8,1177.9 815.8,1174.3 820.9,1170.7 826.0,1167.2 831.3,1163.6 836.6,1160.0 842.0,1156.4 847.6,1152.8 853.2,1149.1 858.9,1145.5 864.7,1141.9 870.6,1138.3 876.6,1134.6 882.6,1131.0 888.8,1127.3 895.1,1123.6 901.4,1120.0 907.8,1116.3 914.4,1112.6 921.0,1108.9 927.7,1105.2 934.5,1101.5 941.4,1097.8 948.4,1094.1 955.5,1090.3 962.6,1086.6 969.9,1082.9 977.2,1079.1 984.7,1075.4 992.2,1071.6 999.8,1067.8 1007.5,1064.0 1015.4,1060.3 1023.3,1056.5 1031.2,1052.7 1039.3,1048.9 1047.5,1045.1 1055.8,1041.3 1064.1,1037.4 1072.6,1033.6 1081.1,1029.8 1089.7,1025.9 1098.4,1022.1 1107.3,1018.2 1116.2,1014.3 1125.2,1010.5 1134.2,1006.6 1143.4,1002.7 1152.7,998.8 1162.0,994.9 1171.5,991.0 1181.0,987.1 1190.7,983.2 1200.4,979.2 1210.2,975.3 1220.1,971.4 1230.1,967.4 1240.2,963.5 1250.4,959.5 1260.7,955.5 1271.0,951.6 1281.5,947.6 1292.0,943.6 1302.7,939.6 1313.4,935.6 1324.2,931.6 1335.1,927.6 1346.1,923.5 1357.2,919.5 1368.4,915.5 1379.7,911.4 1391.1,907.4 1402.5,903.3 1414.1,899.3 1425.7,895.2 1437.4,891.1 1449.3,887.0 1461.2,882.9 1473.2,878.8 1485.3,874.7 1497.5,870.6 1509.8,866.5 1522.1,862.4 1534.6,858.2 1547.2,854.1 1559.8,850.0 1572.5,845.8 1585.4,841.6 1598.3,837.5 1611.3,833.3 1624.4,829.1 1637.6,824.9 1650.9,820.7 1664.3,816.5 1677.7,812.3 1691.3,808.1 1704.9,803.9 1718.7,799.7 1732.5,795.4 1746.4,791.2 1760.5,786.9 1774.6,782.7 1788.8,778.4 1803.1,774.1 1817.4,769.9 1831.9,765.6 1846.5,761.3" fill="none" stroke="#aa00ff" stroke-width="8" stroke-linecap="round" stroke-linejoin="round"/>
<polyline points="195.3,1396.8 323.1,1387.1 323.2,1380.3 323.3,1373.6 323.6,1366.8 324.1,1360.0 324.6,1353.1 325.2,1346.3 326.0,1339.5 326.9,1332.7 327.9,1325.8 329.1,1319.0 330.3,1312.1 331.7,1305.2 333.2,1298.3 334.8,1291.4 336.5,1284.5 338.3,1277.6 340.3,1270.7 342.4,1263.8 344.6,1256.8 346.9,1249.9 349.3,1242.9 351.9,1236.0 354.6,1229.0 357.4,1222.0 360.3,1215.0 363.3,1208.0 366.5,1201.0 369.8,1194.0 373.1,1187.0 376.7,1179.9 380.3,1172.9 384.0,1165.8 387.9,1158.8 391.9,1151.7 396.0,1144.6 400.2,1137.5 404.6,1130.4 409.0,1123.3 413.6,1116.2 418.3,1109.1 423.1,1101.9 428.1,1094.8 433.1,1087.6 438.3,1080.5 443.6,1073.3 449.0,1066.1 454.6,1058.9 460.2,1051.7 466.0,1044.5 471.9,1037.3 477.9,1030.1 484.0,1022.9 490.3,1015.6 496.6,1008.4 503.1,1001.1 509.7,993.8 516.4,986.6 523.3,979.3 530.2,972.0 537.3,964.7 544.5,957.4 551.8,950.0 559.3,942.7 566.8,935.4 574.5,928.0 582.3,920.6 590.2,913.3 598.3,905.9 606.4,898.5 614.7,891.1 623.1,883.7 631.6,876.3 640.2,868.9 649.0,861.4 657.8,854.0 666.8,846.6 675.9,839.1 685.1,831.6 694.5,824.2 703.9,816.7 713.5,809.2 723.2,801.7 733.0,794.2 743.0,786.6 753.0,779.1 763.2,771.6 773.5,764.0 783.9,756.5 794.5,748.9 805.1,741.3 815.9,733.7 826.8,726.2 837.8,718.6 848.9,710.9 860.2,703.3 871.5,695.7 883.0,688.1 894.6,680.4 906.3,672.8 918.2,665.1 930.1,657.4 942.2,649.7 954.4,642.0 966.7,634.3 979.2,626.6 991.7,618.9 1004.4,611.2 1017.2,603.5 1030.1,595.7 1043.1,588.0 1056.3,580.2 1069.6,572.4 1082.9,564.6 1096.5,556.9 1110.1,549.1 1123.8,541.3 1137.7,533.4 1151.7,525.6 1165.8,517.8 1180.0,509.9 1194.3,502.1 1208.8,494.2 1223.4,486.3 1238.1,478.5 1252.9,470.6 1267.8,462.7 1282.9,454.8 1298.1,446.9 1313.4,438.9 1328.8,431.0 1344.3,423.1 1360.0,415.1 1375.7,407.2 1391.6,399.2 1407.6,391.2 1423.7,383.2 1440.0,375.2 1456.4,367.2 1472.8,359.2 1489.4,351.2 1506.2,343.1 1523.0,335.1 1540.0,327.1 1557.0,319.0 1574.2,310.9 1591.6,302.9 1609.0,294.8 1626.5,286.7 1644.2,278.6 1662.0,270.5 1679.9,262.3 1697.9,254.2 1716.1,246.1 1734.4,237.9 1752.8,229.8 1771.3,221.6 1789.9,213.4 1808.6,205.2 1827.5,197.0 1846.5,188.8" fill="none" stroke="#a54eff" stroke-width="8" stroke-linecap="round" stroke-linejoin="round"/>
<polyline points="514.6,1367.7 514.8,1362.7 515.0,1357.7 515.4,1352.7 515.9,1347.7 516.4,1342.7 517.1,1337.7 517.9,1332.7 518.8,1327.6 519.8,1322.6 520.8,1317.5 522.0,1312.5 523.3,1307.4 524.7,1302.3 526.3,1297.2 527.9,1292.1 529.6,1287.0 531.4,1281.9 533.3,1276.8 535.4,1271.7 537.5,1266.5 539.7,1261.4 542.1,1256.3 544.5,1251.1 547.1,1245.9 549.7,1240.8 552.5,1235.6 555.3,1230.4 558.3,1225.2 561.4,1220.0 564.6,1214.8 567.8,1209.6 571.2,1204.3 574.7,1199.1 578.3,1193.9 582.0,1188.6 585.8,1183.4 589.7,1178.1 593.7,1172.8 597.8,1167.5 602.0,1162.2 606.3,1156.9 610.8,1151.6 615.3,1146.3 619.9,1141.0 624.6,1135.7 629.5,1130.3 634.4,1125.0 639.5,1119.6 644.6,1114.3 649.9,1108.9 655.2,1103.5 660.7,1098.1 666.3,1092.8 671.9,1087.4 677.7,1082.0 683.6,1076.5 689.6,1071.1 695.7,1065.7 701.9,1060.2 708.1,1054.8 714.5,1049.3 721.1,1043.9 727.7,1038.4 734.4,1032.9 741.2,1027.4 748.1,1022.0 755.1,1016.4 762.3,1010.9 769.5,1005.4 776.8,999.9 784.3,994.4 791.8,988.8 799.5,983.3 807.2,977.7 815.1,972.2 823.0,966.6 831.1,961.0 839.3,955.4 847.5,949.8 855.9,944.2 864.4,938.6 873.0,933.0 881.7,927.4 890.5,921.7 899.4,916.1 908.4,910.4 917.5,904.8 926.7,899.1 936.0,893.4 945.4,887.8 954.9,882.1 964.5,876.4 974.3,870.7 984.1,864.9 994.0,859.2 1004.1,853.5 1014.2,847.8 1024.5,842.0 1034.8,836.3 1045.3,830.5 1055.9,824.7 1066.5,819.0 1077.3,813.2 1088.2,807.4 1099.1,801.6 1110.2,795.8 1121.4,790.0 1132.7,784.1 1144.1,778.3 1155.6,772.5 1167.2,766.6 1178.9,760.8 1190.7,754.9 1202.6,749.0 1214.6,743.2 1226.8,737.3 1239.0,731.4 1251.3,725.5 1263.8,719.6 1276.3,713.6 1288.9,707.7 1301.7,701.8 1314.5,695.9 1327.5,689.9 1340.6,683.9 1353.7,678.0 1367.0,672.0 1380.4,666.0 1393.8,660.0 1407.4,654.0 1421.1,648.0 1434.9,642.0 1448.8,636.0 1462.8,630.0 1476.9,624.0 1491.1,617.9 1505.4,611.9 1519.8,605.8 1534.3,599.7 1548.9,593.7 1563.7,587.6 1578.5,581.5 1593.4,575.4 1608.4,569.3 1623.6,563.2 1638.8,557.1 1654.2,550.9 1669.6,544.8 1685.2,538.6 1700.9,532.5 1716.6,526.3 1732.5,520.2 1748.5,514.0 1764.5,507.8 1780.7,501.6 1797.0,495.4 1813.4,489.2 1829.9,483.0 1846.5,476.8" fill="none" stroke="#000" stroke-width="7.4" stroke-linecap="round" stroke-linejoin="round"/>
<line x1="515.5" y1="1211" x2="1846.5" y2="276.8" stroke="#ff5500" stroke-width="7.6" stroke-linecap="round"/>
<line x1="357.9" y1="174.2" x2="357.9" y2="1413.7" stroke="#808080" stroke-opacity="0.27" stroke-width="4.2"/>
<line x1="590.2" y1="174.2" x2="590.2" y2="1413.7" stroke="#808080" stroke-opacity="0.27" stroke-width="4.2"/>
<line x1="822.5" y1="174.2" x2="822.5" y2="1413.7" stroke="#808080" stroke-opacity="0.27" stroke-width="4.2"/>
<line x1="1054.8" y1="174.2" x2="1054.8" y2="1413.7" stroke="#808080" stroke-opacity="0.27" stroke-width="4.2"/>
<line x1="1287.1" y1="174.2" x2="1287.1" y2="1413.7" stroke="#808080" stroke-opacity="0.27" stroke-width="4.2"/>
<line x1="1519.4" y1="174.2" x2="1519.4" y2="1413.7" stroke="#808080" stroke-opacity="0.27" stroke-width="4.2"/>
<line x1="1751.7" y1="174.2" x2="1751.7" y2="1413.7" stroke="#808080" stroke-opacity="0.27" stroke-width="4.2"/>
<line x1="182.7" y1="1349.5" x2="1861.8" y2="1349.5" stroke="#808080" stroke-opacity="0.27" stroke-width="4.2"/>
<line x1="182.7" y1="1174.5" x2="1861.8" y2="1174.5" stroke="#808080" stroke-opacity="0.27" stroke-width="4.2"/>
<line x1="182.7" y1="999.5" x2="1861.8" y2="999.5" stroke="#808080" stroke-opacity="0.27" stroke-width="4.2"/>
<line x1="182.7" y1="824.5" x2="1861.8" y2="824.5" stroke="#808080" stroke-opacity="0.27" stroke-width="4.2"/>
<line x1="182.7" y1="649.5" x2="1861.8" y2="649.5" stroke="#808080" stroke-opacity="0.27" stroke-width="4.2"/>
<line x1="182.7" y1="474.5" x2="1861.8" y2="474.5" stroke="#808080" stroke-opacity="0.27" stroke-width="4.2"/>
<line x1="182.7" y1="299.5" x2="1861.8" y2="299.5" stroke="#808080" stroke-opacity="0.27" stroke-width="4.2"/>
</g>
<rect x="182.7" y="174.2" width="1679.1" height="1239.5" fill="none" stroke="#2a2a2a" stroke-width="3.8"/>
<line x1="167.5" y1="1384.5" x2="182.7" y2="1384.5" stroke="#2e2e2e" stroke-width="3"/>
<line x1="155" y1="1349.5" x2="182.7" y2="1349.5" stroke="#2e2e2e" stroke-width="3"/>
<line x1="167.5" y1="1314.5" x2="182.7" y2="1314.5" stroke="#2e2e2e" stroke-width="3"/>
<line x1="167.5" y1="1279.5" x2="182.7" y2="1279.5" stroke="#2e2e2e" stroke-width="3"/>
<line x1="167.5" y1="1244.5" x2="182.7" y2="1244.5" stroke="#2e2e2e" stroke-width="3"/>
<line x1="167.5" y1="1209.5" x2="182.7" y2="1209.5" stroke="#2e2e2e" stroke-width="3"/>
<line x1="155" y1="1174.5" x2="182.7" y2="1174.5" stroke="#2e2e2e" stroke-width="3"/>
<line x1="167.5" y1="1139.5" x2="182.7" y2="1139.5" stroke="#2e2e2e" stroke-width="3"/>
<line x1="167.5" y1="1104.5" x2="182.7" y2="1104.5" stroke="#2e2e2e" stroke-width="3"/>
<line x1="167.5" y1="1069.5" x2="182.7" y2="1069.5" stroke="#2e2e2e" stroke-width="3"/>
<line x1="167.5" y1="1034.5" x2="182.7" y2="1034.5" stroke="#2e2e2e" stroke-width="3"/>
<line x1="155" y1="999.5" x2="182.7" y2="999.5" stroke="#2e2e2e" stroke-width="3"/>
<line x1="167.5" y1="964.5" x2="182.7" y2="964.5" stroke="#2e2e2e" stroke-width="3"/>
<line x1="167.5" y1="929.5" x2="182.7" y2="929.5" stroke="#2e2e2e" stroke-width="3"/>
<line x1="167.5" y1="894.5" x2="182.7" y2="894.5" stroke="#2e2e2e" stroke-width="3"/>
<line x1="167.5" y1="859.5" x2="182.7" y2="859.5" stroke="#2e2e2e" stroke-width="3"/>
<line x1="155" y1="824.5" x2="182.7" y2="824.5" stroke="#2e2e2e" stroke-width="3"/>
<line x1="167.5" y1="789.5" x2="182.7" y2="789.5" stroke="#2e2e2e" stroke-width="3"/>
<line x1="167.5" y1="754.5" x2="182.7" y2="754.5" stroke="#2e2e2e" stroke-width="3"/>
<line x1="167.5" y1="719.5" x2="182.7" y2="719.5" stroke="#2e2e2e" stroke-width="3"/>
<line x1="167.5" y1="684.5" x2="182.7" y2="684.5" stroke="#2e2e2e" stroke-width="3"/>
<line x1="155" y1="649.5" x2="182.7" y2="649.5" stroke="#2e2e2e" stroke-width="3"/>
<line x1="167.5" y1="614.5" x2="182.7" y2="614.5" stroke="#2e2e2e" stroke-width="3"/>
<line x1="167.5" y1="579.5" x2="182.7" y2="579.5" stroke="#2e2e2e" stroke-width="3"/>
<line x1="167.5" y1="544.5" x2="182.7" y2="544.5" stroke="#2e2e2e" stroke-width="3"/>
<line x1="167.5" y1="509.5" x2="182.7" y2="509.5" stroke="#2e2e2e" stroke-width="3"/>
<line x1="155" y1="474.5" x2="182.7" y2="474.5" stroke="#2e2e2e" stroke-width="3"/>
<line x1="167.5" y1="439.5" x2="182.7" y2="439.5" stroke="#2e2e2e" stroke-width="3"/>
<line x1="167.5" y1="404.5" x2="182.7" y2="404.5" stroke="#2e2e2e" stroke-width="3"/>
<line x1="167.5" y1="369.5" x2="182.7" y2="369.5" stroke="#2e2e2e" stroke-width="3"/>
<line x1="167.5" y1="334.5" x2="182.7" y2="334.5" stroke="#2e2e2e" stroke-width="3"/>
<line x1="155" y1="299.5" x2="182.7" y2="299.5" stroke="#2e2e2e" stroke-width="3"/>
<line x1="167.5" y1="264.5" x2="182.7" y2="264.5" stroke="#2e2e2e" stroke-width="3"/>
<line x1="167.5" y1="229.5" x2="182.7" y2="229.5" stroke="#2e2e2e" stroke-width="3"/>
<line x1="167.5" y1="194.5" x2="182.7" y2="194.5" stroke="#2e2e2e" stroke-width="3"/>
<line x1="218.5" y1="1413.7" x2="218.5" y2="1427" stroke="#2e2e2e" stroke-width="3"/>
<line x1="265.0" y1="1413.7" x2="265.0" y2="1427" stroke="#2e2e2e" stroke-width="3"/>
<line x1="311.4" y1="1413.7" x2="311.4" y2="1427" stroke="#2e2e2e" stroke-width="3"/>
<line x1="357.9" y1="1413.7" x2="357.9" y2="1438" stroke="#2e2e2e" stroke-width="3"/>
<line x1="404.4" y1="1413.7" x2="404.4" y2="1427" stroke="#2e2e2e" stroke-width="3"/>
<line x1="450.8" y1="1413.7" x2="450.8" y2="1427" stroke="#2e2e2e" stroke-width="3"/>
<line x1="497.3" y1="1413.7" x2="497.3" y2="1427" stroke="#2e2e2e" stroke-width="3"/>
<line x1="543.7" y1="1413.7" x2="543.7" y2="1427" stroke="#2e2e2e" stroke-width="3"/>
<line x1="590.2" y1="1413.7" x2="590.2" y2="1438" stroke="#2e2e2e" stroke-width="3"/>
<line x1="636.7" y1="1413.7" x2="636.7" y2="1427" stroke="#2e2e2e" stroke-width="3"/>
<line x1="683.1" y1="1413.7" x2="683.1" y2="1427" stroke="#2e2e2e" stroke-width="3"/>
<line x1="729.6" y1="1413.7" x2="729.6" y2="1427" stroke="#2e2e2e" stroke-width="3"/>
<line x1="776.0" y1="1413.7" x2="776.0" y2="1427" stroke="#2e2e2e" stroke-width="3"/>
<line x1="822.5" y1="1413.7" x2="822.5" y2="1438" stroke="#2e2e2e" stroke-width="3"/>
<line x1="869.0" y1="1413.7" x2="869.0" y2="1427" stroke="#2e2e2e" stroke-width="3"/>
<line x1="915.4" y1="1413.7" x2="915.4" y2="1427" stroke="#2e2e2e" stroke-width="3"/>
<line x1="961.9" y1="1413.7" x2="961.9" y2="1427" stroke="#2e2e2e" stroke-width="3"/>
<line x1="1008.3" y1="1413.7" x2="1008.3" y2="1427" stroke="#2e2e2e" stroke-width="3"/>
<line x1="1054.8" y1="1413.7" x2="1054.8" y2="1438" stroke="#2e2e2e" stroke-width="3"/>
<line x1="1101.3" y1="1413.7" x2="1101.3" y2="1427" stroke="#2e2e2e" stroke-width="3"/>
<line x1="1147.7" y1="1413.7" x2="1147.7" y2="1427" stroke="#2e2e2e" stroke-width="3"/>
<line x1="1194.2" y1="1413.7" x2="1194.2" y2="1427" stroke="#2e2e2e" stroke-width="3"/>
<line x1="1240.6" y1="1413.7" x2="1240.6" y2="1427" stroke="#2e2e2e" stroke-width="3"/>
<line x1="1287.1" y1="1413.7" x2="1287.1" y2="1438" stroke="#2e2e2e" stroke-width="3"/>
<line x1="1333.6" y1="1413.7" x2="1333.6" y2="1427" stroke="#2e2e2e" stroke-width="3"/>
<line x1="1380.0" y1="1413.7" x2="1380.0" y2="1427" stroke="#2e2e2e" stroke-width="3"/>
<line x1="1426.5" y1="1413.7" x2="1426.5" y2="1427" stroke="#2e2e2e" stroke-width="3"/>
<line x1="1472.9" y1="1413.7" x2="1472.9" y2="1427" stroke="#2e2e2e" stroke-width="3"/>
<line x1="1519.4" y1="1413.7" x2="1519.4" y2="1438" stroke="#2e2e2e" stroke-width="3"/>
<line x1="1565.9" y1="1413.7" x2="1565.9" y2="1427" stroke="#2e2e2e" stroke-width="3"/>
<line x1="1612.3" y1="1413.7" x2="1612.3" y2="1427" stroke="#2e2e2e" stroke-width="3"/>
<line x1="1658.8" y1="1413.7" x2="1658.8" y2="1427" stroke="#2e2e2e" stroke-width="3"/>
<line x1="1705.2" y1="1413.7" x2="1705.2" y2="1427" stroke="#2e2e2e" stroke-width="3"/>
<line x1="1751.7" y1="1413.7" x2="1751.7" y2="1438" stroke="#2e2e2e" stroke-width="3"/>
<line x1="1798.2" y1="1413.7" x2="1798.2" y2="1427" stroke="#2e2e2e" stroke-width="3"/>
<line x1="1844.6" y1="1413.7" x2="1844.6" y2="1427" stroke="#2e2e2e" stroke-width="3"/>
<line x1="1867" y1="268.3" x2="2004" y2="268.3" stroke="#222" stroke-width="3"/>
<line x1="1867" y1="339.4" x2="1923" y2="339.4" stroke="#909090" stroke-width="2.5"/>
<line x1="1867" y1="630.4" x2="1923" y2="630.4" stroke="#909090" stroke-width="2.5"/>
<line x1="1867.7" y1="339" x2="1867.7" y2="631" stroke="#c0c0c0" stroke-width="1.5"/>
<circle cx="1892.9" cy="374.9" r="15" fill="url(#gN)" stroke="#777" stroke-width="1.5"/>
<circle cx="1892.9" cy="430" r="15" fill="url(#gB)" stroke="#0b5c8e" stroke-width="1.5"/>
<circle cx="1892.9" cy="486.6" r="15" fill="url(#gU)" stroke="#002f8f" stroke-width="1.5"/>
<circle cx="1892.9" cy="540.7" r="15" fill="url(#gT)" stroke="#6a35a5" stroke-width="1.5"/>
<circle cx="1892.9" cy="597.2" r="15" fill="url(#gG)" stroke="#008800" stroke-width="1.5"/>
</svg>
<span class="t" style="left:127.4px;transform-origin:0 0;top:1332.7px;font-size:34px;color:#000;transform:scaleX(1.0338);">0</span>
<span class="t" style="left:89.6px;transform-origin:0 0;top:1157.7px;font-size:34px;color:#000;transform:scaleX(1.0123);">100</span>
<span class="t" style="left:90.4px;transform-origin:0 0;top:982.7px;font-size:34px;color:#000;">200</span>
<span class="t" style="left:90.9px;transform-origin:0 0;top:807.7px;font-size:34px;color:#000;transform:scaleX(0.9889);">300</span>
<span class="t" style="left:91.4px;transform-origin:0 0;top:632.7px;font-size:34px;color:#000;transform:scaleX(0.9798);">400</span>
<span class="t" style="left:90.6px;transform-origin:0 0;top:457.7px;font-size:34px;color:#000;transform:scaleX(0.9935);">500</span>
<span class="t" style="left:90.4px;transform-origin:0 0;top:282.7px;font-size:34px;color:#000;">600</span>
<span class="t" style="left:333.5px;transform-origin:0 0;top:1445.0px;font-size:34px;color:#000;transform:scaleX(1.0314);">-20</span>
<span class="t" style="left:565.8px;transform-origin:0 0;top:1445.0px;font-size:34px;color:#000;transform:scaleX(1.0314);">-10</span>
<span class="t" style="left:812.8px;transform-origin:0 0;top:1445.0px;font-size:34px;color:#000;transform:scaleX(1.0338);">0</span>
<span class="t" style="left:1034.7px;transform-origin:0 0;top:1445.0px;font-size:34px;color:#000;transform:scaleX(1.0324);">10</span>
<span class="t" style="left:1267.8px;transform-origin:0 0;top:1445.0px;font-size:34px;color:#000;transform:scaleX(1.0101);">20</span>
<span class="t" style="left:1500.6px;transform-origin:0 0;top:1445.0px;font-size:34px;color:#000;transform:scaleX(0.9957);">30</span>
<span class="t" style="left:1733.4px;transform-origin:0 0;top:1445.0px;font-size:34px;color:#000;transform:scaleX(0.9818);">40</span>
<span class="t" style="left:1867.3px;transform-origin:0 0;top:184.6px;font-size:33px;color:#000;transform:scaleX(0.9851);">Data</span>
<span class="t" style="left:1866.9px;transform-origin:0 0;top:230.9px;font-size:33px;color:#000;transform:scaleX(1.0438);">Included</span>
<span class="t" style="left:1866.8px;transform-origin:0 0;top:286.1px;font-size:33px;color:#000;transform:scaleX(0.9783);">Test Type</span>
<span class="t" style="left:1937.5px;transform-origin:0 0;top:362.1px;font-size:33px;color:#000;transform:scaleX(1.0962);">Null</span>
<span class="t" style="left:1936.2px;transform-origin:0 0;top:419.1px;font-size:33px;color:#000;transform:scaleX(0.8250);">BTS</span>
<span class="t" style="left:1936.3px;transform-origin:0 0;top:472.1px;font-size:33px;color:#000;transform:scaleX(0.8821);">UCS</span>
<span class="t" style="left:1937.9px;transform-origin:0 0;top:526.1px;font-size:33px;color:#000;transform:scaleX(0.8314);">TCS</span>
<span class="t" style="left:1005px;top:1494px;font-size:34px;">σ<span style="font-size:22px;position:relative;top:9px;">3</span></span>
<span class="t" style="left:31px;top:771px;font-size:32px;transform:rotate(-90deg);transform-origin:50% 50%;width:40px;">σ<span style="font-size:21px;position:relative;top:8px;">1</span></span>
<span class="t" style="left:1720.0px;transform-origin:0 0;top:1353.5px;font-size:44px;color:#1c1f5e;transform:scaleX(1.0341);">m</span>
<span class="t" style="left:1785.6px;transform-origin:0 0;top:1353.5px;font-size:44px;color:#1c1f5e;transform:scaleX(0.9576);">rap</span>
<svg class="a" style="left:1753px;top:1353px" width="40" height="50" viewBox="0 0 40 50">
<path d="M32.5,6.5 L9.5,45" stroke="#1c1f5e" stroke-width="5.2" fill="none"/>
<path d="M4,12 C5,5 11,4 13.5,10 L23.5,37 C25.5,43.5 31,43 33,38.5" stroke="#1c1f5e" stroke-width="2.6" fill="none" stroke-linecap="round"/>
</svg>
<span class="t" style="left:16.7px;transform-origin:0 0;top:1553.7px;font-size:37px;color:#000;transform:scaleX(1.0872);">Parameters for the Hoek-Brown envelope for intact rock:</span>
<span class="t" style="left:61.2px;transform-origin:0 0;top:1610.7px;font-size:37px;color:#000;transform:scaleX(1.1050);">m<span style="font-size:24px;position:relative;top:7px;">i</span> = 16.49</span>
<span class="t" style="left:62.4px;transform-origin:0 0;top:1666.3px;font-size:37px;color:#000;transform:scaleX(1.0661);">σ<span style="font-size:24px;position:relative;top:7px;">c</span> = 218.6; Lower and Upper Percentile = 102.8 - 355.3</span>
<span class="t" style="left:16.6px;transform-origin:0 0;top:1776.7px;font-size:37px;color:#000;transform:scaleX(1.1200);">Mohr-Coulomb Criterion:</span>
<span class="t" style="left:62.1px;transform-origin:0 0;top:1833.7px;font-size:37px;color:#000;transform:scaleX(1.0697);">Cohesion = 33.2</span>
<span class="t" style="left:60.7px;transform-origin:0 0;top:1887.7px;font-size:37px;color:#000;transform:scaleX(1.0971);">Friction Angle = 0.9</span>
<span class="t" style="left:17.2px;transform-origin:0 0;top:1995.1px;font-size:33px;color:#000;transform:scaleX(1.0118);">Fit Settings: MCMC, Absolute, mi Scaling Dynamic, Student's t</span>
<div class="a" style="left:2092.5px;top:0.0px;width:900.0px;height:24.0px;background:#e1cce1;"></div>
<span class="t" style="left:2446.3px;transform-origin:0 0;top:-18.4px;font-size:33px;font-weight:bold;color:#000;transform:scaleX(0.9857);">Chart Series</span>
<div class="bb" style="left:2098px;top:37px;width:588px;height:76px;background:#9ab6fb;border-color:#6f86bd #8a94b4 #8a94b4 #6f86bd;"></div>
<span class="t" style="left:2112.8px;transform-origin:0 0;top:59.9px;font-size:34px;color:#000;">Controls</span>
<div class="a" style="left:2092.5px;top:127.0px;width:899.0px;height:866.0px;background:#f0f0f0;border:2px solid #b4b4b4;border-right:none;"></div>
<div class="a" style="left:2991.0px;top:127.0px;width:22.0px;height:866.0px;background:#fafafa;"></div>
<div class="gb" style="left:2096px;top:139px;width:66px;height:67px;"></div>
<svg class="a" style="left:2105.0px;top:148.5px" width="52" height="50" viewBox="0 0 52 50">
<g stroke="#000" stroke-linecap="round" fill="none">
<line x1="20" y1="8" x2="44" y2="8" stroke-width="5.3"/><line x1="20" y1="25" x2="44" y2="25" stroke-width="5.3"/><line x1="20" y1="42.5" x2="44" y2="42.5" stroke-width="5.3"/>
<line x1="1.5" y1="8" x2="12.5" y2="8" stroke-width="4"/><line x1="7" y1="2.5" x2="7" y2="13.5" stroke-width="4"/>
<path d="M7,20.5 L11.5,28.5 L2.5,28.5 Z" stroke-width="3" stroke-linejoin="round"/>
<circle cx="7" cy="42.5" r="4.2" stroke-width="3.4"/>
</g></svg>
<div class="bb" style="left:2169.5px;top:135.5px;width:794.5px;height:77px;"></div>
<span class="t" style="left:2183.7px;transform-origin:0 0;top:159.4px;font-size:34px;color:#000;transform:scaleX(0.9723);">Legends</span>
<div class="bb" style="left:2315.5px;top:225.5px;width:648.5px;height:79.0px;"></div>
<span class="t" style="left:2391.8px;transform-origin:0 0;top:250.4px;font-size:34px;color:#000;transform:scaleX(0.9697);">Fitted [95% Parameter Space]</span>
<div class="gb" style="left:2167px;top:232.0px;width:66.5px;height:66px;"></div>
<svg class="a" style="left:2176.0px;top:240.5px" width="52" height="50" viewBox="0 0 52 50">
<g stroke="#000" stroke-linecap="round" stroke-linejoin="round" fill="none" stroke-width="5.2">
<path d="M3,3 L3,36 Q3,47 14,47 L48,47"/>
<path d="M14,28.8 L23.2,16.1 L34.2,24.8 L43.5,12" stroke-width="4.8"/>
</g></svg>
<svg class="a" style="left:2248.5px;top:240.0px" width="52" height="50" viewBox="0 0 52 50">
<g stroke="#000" stroke-linecap="round" fill="none">
<line x1="20" y1="8" x2="44" y2="8" stroke-width="5.3"/><line x1="20" y1="25" x2="44" y2="25" stroke-width="5.3"/><line x1="20" y1="42.5" x2="44" y2="42.5" stroke-width="5.3"/>
<line x1="1.5" y1="8" x2="12.5" y2="8" stroke-width="4"/><line x1="7" y1="2.5" x2="7" y2="13.5" stroke-width="4"/>
<path d="M7,20.5 L11.5,28.5 L2.5,28.5 Z" stroke-width="3" stroke-linejoin="round"/>
<circle cx="7" cy="42.5" r="4.2" stroke-width="3.4"/>
</g></svg>
<svg class="a" style="left:2329.5px;top:239.8px" width="50" height="50" viewBox="0 0 50 50"><defs><filter id="bl" x="-5%" y="-5%" width="110%" height="110%"><feGaussianBlur stdDeviation="0.7"/></filter><clipPath id="fc"><rect width="50" height="50"/></clipPath></defs><rect width="50" height="50" fill="#fff"/>
<g clip-path="url(#fc)"><g filter="url(#bl)">
<polygon points="0,0 0,8 5,23.5 9,36.6 13.4,50 49.5,50 38.8,40.1 30,30 21.3,16.9 12.5,0" fill="#00ecd8"/>
<polygon points="0,0 8.1,25 17,50 36,50 21.3,25 9,0" fill="#20f020"/>
<polygon points="1.8,0 9.9,25 19.5,50 32.5,50 18.2,25 6.5,0" fill="#e8e800"/>
<polygon points="2.5,0 11,25 22,50 30,50 16.9,25 5.5,0" fill="#e00800"/>
</g></g></svg>
<div class="bb" style="left:2315.5px;top:318.5px;width:648.5px;height:79.0px;"></div>
<span class="t" style="left:2391.7px;transform-origin:0 0;top:341.8px;font-size:34px;color:#000;transform:scaleX(1.0073);">Data Included</span>
<div class="gb" style="left:2096px;top:325.0px;width:66px;height:67px;"></div>
<svg class="a" style="left:2102.7px;top:331.5px" width="56" height="56" viewBox="0 0 56 56">
<line x1="33" y1="33" x2="49" y2="49" stroke="#1a1a1a" stroke-width="8.5" stroke-linecap="round"/>
<line x1="36.5" y1="36.5" x2="48.5" y2="48.5" stroke="#f0a838" stroke-width="5" stroke-linecap="round"/>
<line x1="33" y1="33" x2="36.5" y2="36.5" stroke="#fff" stroke-width="4"/>
<circle cx="21" cy="21" r="18" fill="#c6f3fb" stroke="#1a1a1a" stroke-width="2"/>
<circle cx="21" cy="21" r="15" fill="none" stroke="#5fbfe6" stroke-width="4.2"/>
<circle cx="21" cy="21" r="12.5" fill="none" stroke="#1a1a1a" stroke-width="1.4"/>
<path d="M26,11 Q31,15 31.5,20" stroke="#fff" stroke-width="2.2" fill="none"/>
</svg>
<div class="gb" style="left:2239px;top:325.0px;width:65.5px;height:67px;"></div>
<svg class="a" style="left:2248.5px;top:333.0px" width="52" height="50" viewBox="0 0 52 50">
<g stroke="#000" stroke-linecap="round" fill="none">
<line x1="20" y1="8" x2="44" y2="8" stroke-width="5.3"/><line x1="20" y1="25" x2="44" y2="25" stroke-width="5.3"/><line x1="20" y1="42.5" x2="44" y2="42.5" stroke-width="5.3"/>
<line x1="1.5" y1="8" x2="12.5" y2="8" stroke-width="4"/><line x1="7" y1="2.5" x2="7" y2="13.5" stroke-width="4"/>
<path d="M7,20.5 L11.5,28.5 L2.5,28.5 Z" stroke-width="3" stroke-linejoin="round"/>
<circle cx="7" cy="42.5" r="4.2" stroke-width="3.4"/>
</g></svg>
<svg class="a" style="left:2329px;top:332.3px" width="52" height="52"><defs><radialGradient id="wb" cx="48%" cy="42%" r="56%"><stop offset="0" stop-color="#fff"/><stop offset="0.6" stop-color="#fcfcfc"/><stop offset="0.85" stop-color="#dcdcdc"/><stop offset="1" stop-color="#a8a8a8"/></radialGradient></defs><circle cx="25.5" cy="25.5" r="24" fill="url(#wb)" stroke="#9a9a9a" stroke-width="1.2"/></svg>
<div class="bb" style="left:2315.5px;top:411.5px;width:648.5px;height:79.5px;"></div>
<span class="t" style="left:2391.8px;transform-origin:0 0;top:435.5px;font-size:34px;color:#000;transform:scaleX(0.9711);">Data Excluded</span>
<svg class="a" style="left:2102.7px;top:424.8px" width="56" height="56" viewBox="0 0 56 56">
<line x1="33" y1="33" x2="49" y2="49" stroke="#1a1a1a" stroke-width="8.5" stroke-linecap="round"/>
<line x1="36.5" y1="36.5" x2="48.5" y2="48.5" stroke="#f0a838" stroke-width="5" stroke-linecap="round"/>
<line x1="33" y1="33" x2="36.5" y2="36.5" stroke="#fff" stroke-width="4"/>
<circle cx="21" cy="21" r="18" fill="#c6f3fb" stroke="#1a1a1a" stroke-width="2"/>
<circle cx="21" cy="21" r="15" fill="none" stroke="#5fbfe6" stroke-width="4.2"/>
<circle cx="21" cy="21" r="12.5" fill="none" stroke="#1a1a1a" stroke-width="1.4"/>
<path d="M26,11 Q31,15 31.5,20" stroke="#fff" stroke-width="2.2" fill="none"/>
</svg>
<svg class="a" style="left:2248.5px;top:426.2px" width="52" height="50" viewBox="0 0 52 50">
<g stroke="#000" stroke-linecap="round" fill="none">
<line x1="20" y1="8" x2="44" y2="8" stroke-width="5.3"/><line x1="20" y1="25" x2="44" y2="25" stroke-width="5.3"/><line x1="20" y1="42.5" x2="44" y2="42.5" stroke-width="5.3"/>
<line x1="1.5" y1="8" x2="12.5" y2="8" stroke-width="4"/><line x1="7" y1="2.5" x2="7" y2="13.5" stroke-width="4"/>
<path d="M7,20.5 L11.5,28.5 L2.5,28.5 Z" stroke-width="3" stroke-linejoin="round"/>
<circle cx="7" cy="42.5" r="4.2" stroke-width="3.4"/>
</g></svg>
<svg class="a" style="left:2330px;top:426.6px" width="50" height="50"><defs><linearGradient id="xg" x1="0" y1="0" x2="1" y2="1"><stop offset="0" stop-color="#ececec"/><stop offset="1" stop-color="#b4b4b4"/></linearGradient></defs><line x1="2" y1="3" x2="47" y2="47" stroke="url(#xg)" stroke-width="6"/><line x1="47" y1="3" x2="2" y2="47" stroke="#d0d0d0" stroke-width="6"/></svg>
<div class="bb" style="left:2315.5px;top:509.5px;width:648.5px;height:72.0px;"></div>
<span class="t" style="left:2392.0px;transform-origin:0 0;top:527.3px;font-size:34px;color:#000;">UCS Distribution</span>
<div class="gb" style="left:2167px;top:511.0px;width:66.5px;height:66px;"></div>
<svg class="a" style="left:2176.0px;top:519.5px" width="52" height="50" viewBox="0 0 52 50">
<g stroke="#000" stroke-linecap="round" stroke-linejoin="round" fill="none" stroke-width="5.2">
<path d="M3,3 L3,36 Q3,47 14,47 L48,47"/>
<path d="M14,28.8 L23.2,16.1 L34.2,24.8 L43.5,12" stroke-width="4.8"/>
</g></svg>
<svg class="a" style="left:2248.5px;top:519.0px" width="52" height="50" viewBox="0 0 52 50">
<g stroke="#000" stroke-linecap="round" fill="none">
<line x1="20" y1="8" x2="44" y2="8" stroke-width="5.3"/><line x1="20" y1="25" x2="44" y2="25" stroke-width="5.3"/><line x1="20" y1="42.5" x2="44" y2="42.5" stroke-width="5.3"/>
<line x1="1.5" y1="8" x2="12.5" y2="8" stroke-width="4"/><line x1="7" y1="2.5" x2="7" y2="13.5" stroke-width="4"/>
<path d="M7,20.5 L11.5,28.5 L2.5,28.5 Z" stroke-width="3" stroke-linejoin="round"/>
<circle cx="7" cy="42.5" r="4.2" stroke-width="3.4"/>
</g></svg>
<svg class="a" style="left:2330px;top:519.3px" width="50" height="50" viewBox="0 0 50 50"><rect width="50" height="50" fill="#fff"/><path d="M43.9,3.3 C43.9,14 38,17 27.4,21.7 C18,25.5 8,27.5 4.6,30 C6,33 14,35.5 20.8,37.1 C30,39 38,40 43.6,44.1" fill="none" stroke="#aa1100" stroke-width="4.2" stroke-linecap="round"/></svg>
<div class="bb" style="left:2315.5px;top:598.4px;width:648.5px;height:77.20000000000005px;"></div>
<span class="t" style="left:2391.7px;transform-origin:0 0;top:620.4px;font-size:34px;color:#000;">Hoek-Brown Fit</span>
<div class="gb" style="left:2167px;top:604.0px;width:66.5px;height:66px;"></div>
<svg class="a" style="left:2176.0px;top:612.5px" width="52" height="50" viewBox="0 0 52 50">
<g stroke="#000" stroke-linecap="round" stroke-linejoin="round" fill="none" stroke-width="5.2">
<path d="M3,3 L3,36 Q3,47 14,47 L48,47"/>
<path d="M14,28.8 L23.2,16.1 L34.2,24.8 L43.5,12" stroke-width="4.8"/>
</g></svg>
<svg class="a" style="left:2248.5px;top:612.0px" width="52" height="50" viewBox="0 0 52 50">
<g stroke="#000" stroke-linecap="round" fill="none">
<line x1="20" y1="8" x2="44" y2="8" stroke-width="5.3"/><line x1="20" y1="25" x2="44" y2="25" stroke-width="5.3"/><line x1="20" y1="42.5" x2="44" y2="42.5" stroke-width="5.3"/>
<line x1="1.5" y1="8" x2="12.5" y2="8" stroke-width="4"/><line x1="7" y1="2.5" x2="7" y2="13.5" stroke-width="4"/>
<path d="M7,20.5 L11.5,28.5 L2.5,28.5 Z" stroke-width="3" stroke-linejoin="round"/>
<circle cx="7" cy="42.5" r="4.2" stroke-width="3.4"/>
</g></svg>
<svg class="a" style="left:2330px;top:612.3px" width="50" height="50"><line x1="2" y1="47" x2="47" y2="3" stroke="#fff" stroke-width="5.5"/></svg>
<div class="bb" style="left:2315.5px;top:691.5px;width:648.5px;height:76.10000000000002px;"></div>
<span class="t" style="left:2391.8px;transform-origin:0 0;top:713.5px;font-size:34px;color:#000;transform:scaleX(0.9811);">Lower Percentile</span>
<div class="gb" style="left:2167px;top:696.5px;width:66.5px;height:66px;"></div>
<svg class="a" style="left:2176.0px;top:705.0px" width="52" height="50" viewBox="0 0 52 50">
<g stroke="#000" stroke-linecap="round" stroke-linejoin="round" fill="none" stroke-width="5.2">
<path d="M3,3 L3,36 Q3,47 14,47 L48,47"/>
<path d="M14,28.8 L23.2,16.1 L34.2,24.8 L43.5,12" stroke-width="4.8"/>
</g></svg>
<svg class="a" style="left:2248.5px;top:704.5px" width="52" height="50" viewBox="0 0 52 50">
<g stroke="#000" stroke-linecap="round" fill="none">
<line x1="20" y1="8" x2="44" y2="8" stroke-width="5.3"/><line x1="20" y1="25" x2="44" y2="25" stroke-width="5.3"/><line x1="20" y1="42.5" x2="44" y2="42.5" stroke-width="5.3"/>
<line x1="1.5" y1="8" x2="12.5" y2="8" stroke-width="4"/><line x1="7" y1="2.5" x2="7" y2="13.5" stroke-width="4"/>
<path d="M7,20.5 L11.5,28.5 L2.5,28.5 Z" stroke-width="3" stroke-linejoin="round"/>
<circle cx="7" cy="42.5" r="4.2" stroke-width="3.4"/>
</g></svg>
<svg class="a" style="left:2330px;top:704.8px" width="50" height="50"><line x1="2" y1="47" x2="47" y2="3" stroke="#fff" stroke-width="5.5"/></svg>
<div class="bb" style="left:2315.5px;top:784.6px;width:648.5px;height:77.10000000000002px;"></div>
<span class="t" style="left:2392.0px;transform-origin:0 0;top:806.5px;font-size:34px;color:#000;transform:scaleX(0.9910);">Upper Percentile</span>
<div class="gb" style="left:2167px;top:790.2px;width:66.5px;height:66px;"></div>
<svg class="a" style="left:2176.0px;top:798.7px" width="52" height="50" viewBox="0 0 52 50">
<g stroke="#000" stroke-linecap="round" stroke-linejoin="round" fill="none" stroke-width="5.2">
<path d="M3,3 L3,36 Q3,47 14,47 L48,47"/>
<path d="M14,28.8 L23.2,16.1 L34.2,24.8 L43.5,12" stroke-width="4.8"/>
</g></svg>
<svg class="a" style="left:2248.5px;top:798.2px" width="52" height="50" viewBox="0 0 52 50">
<g stroke="#000" stroke-linecap="round" fill="none">
<line x1="20" y1="8" x2="44" y2="8" stroke-width="5.3"/><line x1="20" y1="25" x2="44" y2="25" stroke-width="5.3"/><line x1="20" y1="42.5" x2="44" y2="42.5" stroke-width="5.3"/>
<line x1="1.5" y1="8" x2="12.5" y2="8" stroke-width="4"/><line x1="7" y1="2.5" x2="7" y2="13.5" stroke-width="4"/>
<path d="M7,20.5 L11.5,28.5 L2.5,28.5 Z" stroke-width="3" stroke-linejoin="round"/>
<circle cx="7" cy="42.5" r="4.2" stroke-width="3.4"/>
</g></svg>
<svg class="a" style="left:2330px;top:798.5px" width="50" height="50"><line x1="2" y1="47" x2="47" y2="3" stroke="#fff" stroke-width="5.5"/></svg>
<div class="bb" style="left:2315.5px;top:876.6px;width:648.5px;height:77.19999999999993px;"></div>
<span class="t" style="left:2391.6px;transform-origin:0 0;top:898.6px;font-size:34px;color:#000;transform:scaleX(1.0496);">Mohr-Coulomb</span>
<div class="gb" style="left:2167px;top:882.2px;width:66.5px;height:66px;"></div>
<svg class="a" style="left:2176.0px;top:890.7px" width="52" height="50" viewBox="0 0 52 50">
<g stroke="#000" stroke-linecap="round" stroke-linejoin="round" fill="none" stroke-width="5.2">
<path d="M3,3 L3,36 Q3,47 14,47 L48,47"/>
<path d="M14,28.8 L23.2,16.1 L34.2,24.8 L43.5,12" stroke-width="4.8"/>
</g></svg>
<svg class="a" style="left:2248.5px;top:890.2px" width="52" height="50" viewBox="0 0 52 50">
<g stroke="#000" stroke-linecap="round" fill="none">
<line x1="20" y1="8" x2="44" y2="8" stroke-width="5.3"/><line x1="20" y1="25" x2="44" y2="25" stroke-width="5.3"/><line x1="20" y1="42.5" x2="44" y2="42.5" stroke-width="5.3"/>
<line x1="1.5" y1="8" x2="12.5" y2="8" stroke-width="4"/><line x1="7" y1="2.5" x2="7" y2="13.5" stroke-width="4"/>
<path d="M7,20.5 L11.5,28.5 L2.5,28.5 Z" stroke-width="3" stroke-linejoin="round"/>
<circle cx="7" cy="42.5" r="4.2" stroke-width="3.4"/>
</g></svg>
<svg class="a" style="left:2330px;top:890.5px" width="50" height="50"><line x1="2" y1="47" x2="47" y2="3" stroke="#fff" stroke-width="5.5"/></svg>
<div class="a" style="left:2524.0px;top:999.5px;width:2.0px;height:2.0px;background:#a0a0a0;"></div>
<div class="a" style="left:2533.0px;top:999.5px;width:2.0px;height:2.0px;background:#a0a0a0;"></div>
<div class="a" style="left:2542.0px;top:999.5px;width:2.0px;height:2.0px;background:#a0a0a0;"></div>
<div class="a" style="left:2551.0px;top:999.5px;width:2.0px;height:2.0px;background:#a0a0a0;"></div>
<div class="a" style="left:2560.0px;top:999.5px;width:2.0px;height:2.0px;background:#a0a0a0;"></div>
<div class="a" style="left:2569.0px;top:999.5px;width:2.0px;height:2.0px;background:#a0a0a0;"></div>
<div class="a" style="left:2062.5px;top:992.5px;width:2.0px;height:2.5px;background:#b4b4b4;"></div>
<div class="a" style="left:2062.5px;top:1001.9px;width:2.0px;height:2.5px;background:#b4b4b4;"></div>
<div class="a" style="left:2062.5px;top:1011.3px;width:2.0px;height:2.5px;background:#b4b4b4;"></div>
<div class="a" style="left:2062.5px;top:1020.7px;width:2.0px;height:2.5px;background:#b4b4b4;"></div>
<div class="a" style="left:2062.5px;top:1030.1px;width:2.0px;height:2.5px;background:#b4b4b4;"></div>
<div class="a" style="left:2062.5px;top:1039.5px;width:2.0px;height:2.5px;background:#b4b4b4;"></div>
<div class="a" style="left:5.0px;top:983.0px;width:2.0px;height:2.0px;background:#b8b8b8;"></div>
<div class="a" style="left:5.0px;top:992.0px;width:2.0px;height:2.0px;background:#b8b8b8;"></div>
<div class="a" style="left:5.0px;top:1001.0px;width:2.0px;height:2.0px;background:#b8b8b8;"></div>
<div class="a" style="left:5.0px;top:1010.0px;width:2.0px;height:2.0px;background:#b8b8b8;"></div>
<div class="a" style="left:5.0px;top:1019.0px;width:2.0px;height:2.0px;background:#b8b8b8;"></div>
<div class="a" style="left:5.0px;top:1028.0px;width:2.0px;height:2.0px;background:#b8b8b8;"></div>
<div class="a" style="left:5.0px;top:1037.0px;width:2.0px;height:2.0px;background:#b8b8b8;"></div>
<div class="a" style="left:2092.5px;top:1007.0px;width:898.0px;height:1042.0px;background:#f0f0f0;"></div>
<div class="a" style="left:2991.0px;top:1000.0px;width:22.0px;height:1049.0px;background:#fafafa;"></div>
<div class="a" style="left:2949.0px;top:1007.0px;width:41.5px;height:1042.0px;background:#f0f0f0;"></div>
<div class="a" style="left:2949.0px;top:1332.0px;width:41.5px;height:681.0px;background:#e2e2e2;"></div>
<div class="a" style="left:2949.0px;top:1007.0px;width:41.5px;height:43.0px;background:#fdfdfd;border:2px solid #d6d6d6;"></div>
<div class="a" style="left:2949.0px;top:2012.5px;width:41.5px;height:37.0px;background:#fdfdfd;border:2px solid #d6d6d6;"></div>
<svg class="a" style="left:2958px;top:1018px" width="26" height="14"><path d="M0,13 L12,0 L24,13 Z" fill="#606060"/></svg>
<svg class="a" style="left:2958px;top:2031px" width="26" height="14"><path d="M0,0 L12,13 L24,0 Z" fill="#606060"/></svg>
<div class="a" style="left:2950.5px;top:1050.0px;width:39.0px;height:282.0px;border:2px solid #a8a8a8;border-radius:4px;background:linear-gradient(90deg,#f8f8f8,#e8e8e8);"></div>
<div class="a" style="left:2958.0px;top:1181.0px;width:25.0px;height:3.0px;background:#9a9a9a;"></div>
<div class="a" style="left:2958.0px;top:1188.0px;width:25.0px;height:3.0px;background:#9a9a9a;"></div>
<div class="a" style="left:2958.0px;top:1195.0px;width:25.0px;height:3.0px;background:#9a9a9a;"></div>
<span class="t" style="left:2091.7px;transform-origin:0 0;top:1027.2px;font-size:34px;font-weight:bold;color:#000;transform:scaleX(0.9847);">Strength curve inputs:</span>
<span class="t" style="left:2091.3px;transform-origin:0 0;top:1095.9px;font-size:34px;color:#000;">Lower percentile:</span>
<div class="inp" style="left:2362px;top:1080.5px;width:534.5px;height:62px;"></div>
<span class="t" style="left:2369.1px;transform-origin:0 0;top:1096.8px;font-size:33px;color:#000;">10</span>
<span class="t" style="left:2914.7px;transform-origin:0 0;top:1096.8px;font-size:33px;color:#000;transform:scaleX(1.0370);">%</span>
<span class="t" style="left:2091.5px;transform-origin:0 0;top:1172.9px;font-size:34px;color:#000;transform:scaleX(1.0069);">Upper percentile:</span>
<div class="inp" style="left:2364px;top:1157px;width:532.5px;height:62px;"></div>
<span class="t" style="left:2372.5px;transform-origin:0 0;top:1173.8px;font-size:33px;color:#000;">90</span>
<span class="t" style="left:2914.7px;transform-origin:0 0;top:1173.8px;font-size:33px;color:#000;transform:scaleX(1.0370);">%</span>
<span class="t" style="left:2090.4px;transform-origin:0 0;top:1239.2px;font-size:34px;font-weight:bold;color:#000;transform:scaleX(1.0078);">Mohr-Coulomb Fit Criterion:</span>
<span class="t" style="left:2091.2px;transform-origin:0 0;top:1309.7px;font-size:34px;color:#000;transform:scaleX(0.9776);text-decoration:underline;text-decoration-thickness:2px;text-underline-offset:4px;">σ3 max</span>
<div class="a" style="left:2216.5px;top:1302.0px;width:41.0px;height:41.0px;background:#fdfdfd;border:2px solid #8c8c8c;"></div>
<svg class="a" style="left:2224px;top:1309.5px" width="27" height="27"><path d="M2,2 L25,25 M25,2 L2,25" stroke="#000" stroke-width="4.6"/></svg>
<div class="inp" style="left:2260px;top:1293px;width:682px;height:62px;"></div>
<span class="t" style="left:2267.8px;transform-origin:0 0;top:1310.6px;font-size:33px;color:#000;">20</span>
<div class="a" style="left:2092.7px;top:1370.0px;width:850.0px;height:3.0px;background:#1a1a1a;"></div>
<div class="a" style="left:2095.5px;top:1408.5px;width:845.0px;height:591.0px;background:#fff;border:3px solid #8fa7c7;"></div>
<div class="a" style="left:2098.0px;top:1411.0px;width:840.0px;height:85.0px;background:#f0f0f0;"></div>
<div class="a" style="left:2098.0px;top:1411.0px;width:61.0px;height:586.0px;background:#f0f0f0;"></div>
<div class="a" style="left:2098.0px;top:1411.0px;width:61.0px;height:84.0px;background:#e0e0ea;border-right:2px solid #9aa8c8;border-bottom:2px solid #9aa8c8;"></div>
<div class="a" style="left:2159.0px;top:1411.0px;width:445.0px;height:84.0px;background:linear-gradient(#f2f4fe,#e3e8fb 50%,#cfd8f3);border-right:3px solid #8ea2d4;border-bottom:3px solid #8ea2d4;"></div>
<div class="a" style="left:2604.0px;top:1411.0px;width:240.0px;height:84.0px;background:linear-gradient(#f2f4fe,#e3e8fb 50%,#cfd8f3);border-right:3px solid #8ea2d4;border-bottom:3px solid #8ea2d4;"></div>
<span class="t" style="left:2306.5px;transform-origin:0 0;top:1435.9px;font-size:34px;color:#000;transform:scaleX(1.0549);">Algorithm</span>
<span class="t" style="left:2658.9px;transform-origin:0 0;top:1435.9px;font-size:34px;color:#000;transform:scaleX(0.9732);">Selected</span>
<div class="a" style="left:2098.0px;top:1495.0px;width:61.0px;height:58.5px;background:#dfe6fb;border-right:2px solid #9aa8c8;border-bottom:2px solid #9aa8c8;"></div>
<div class="a" style="left:2159.0px;top:1495.0px;width:445.0px;height:58.5px;background:#fff;border-right:2px solid #c4cde4;border-bottom:2px solid #c4cde4;"></div>
<div class="a" style="left:2604.0px;top:1495.0px;width:240.0px;height:58.5px;background:#fff;border-right:2px solid #c4cde4;border-bottom:2px solid #c4cde4;"></div>
<span class="t" style="left:2126.8px;transform-origin:0 0;top:1510.2px;font-size:34px;color:#000;">1</span>
<div class="a" style="left:2169.5px;top:1501.0px;width:43.0px;height:43.0px;background:#fff;border:3px solid #2a2a2a;border-radius:5px;"></div>
<span class="t" style="left:2229.8px;transform-origin:0 0;top:1511.2px;font-size:34px;color:#000;transform:scaleX(1.0090);">Hypercube</span>
<div class="a" style="left:2098.0px;top:1553.5px;width:61.0px;height:59.0px;background:#dfe6fb;border-right:2px solid #9aa8c8;border-bottom:2px solid #9aa8c8;"></div>
<div class="a" style="left:2159.0px;top:1553.5px;width:445.0px;height:59.0px;background:#fff;border-right:2px solid #c4cde4;border-bottom:2px solid #c4cde4;"></div>
<div class="a" style="left:2604.0px;top:1553.5px;width:240.0px;height:59.0px;background:#fff;border-right:2px solid #c4cde4;border-bottom:2px solid #c4cde4;"></div>
<span class="t" style="left:2126.8px;transform-origin:0 0;top:1568.7px;font-size:34px;color:#000;">2</span>
<div class="a" style="left:2169.5px;top:1559.5px;width:43.0px;height:43.0px;background:#fff;border:3px solid #2a2a2a;border-radius:5px;"></div>
<span class="t" style="left:2229.8px;transform-origin:0 0;top:1569.7px;font-size:34px;color:#000;transform:scaleX(1.0136);">Levenberg-Marquardt</span>
<div class="a" style="left:2098.0px;top:1612.5px;width:61.0px;height:59.5px;background:#dfe6fb;border-right:2px solid #9aa8c8;border-bottom:2px solid #9aa8c8;"></div>
<div class="a" style="left:2159.0px;top:1612.5px;width:445.0px;height:59.5px;background:#fff;border-right:2px solid #c4cde4;border-bottom:2px solid #c4cde4;"></div>
<div class="a" style="left:2604.0px;top:1612.5px;width:240.0px;height:59.5px;background:#fff;border-right:2px solid #c4cde4;border-bottom:2px solid #c4cde4;"></div>
<span class="t" style="left:2126.5px;transform-origin:0 0;top:1627.7px;font-size:34px;color:#000;">3</span>
<div class="a" style="left:2169.5px;top:1618.5px;width:43.0px;height:43.0px;background:#fff;border:3px solid #2a2a2a;border-radius:5px;"></div>
<span class="t" style="left:2229.8px;transform-origin:0 0;top:1628.7px;font-size:34px;color:#000;">MCMC</span>
<span class="t" style="left:2613.9px;transform-origin:0 0;top:1628.7px;font-size:34px;color:#000;transform:scaleX(0.9802);">Selected</span>
<span class="t" style="left:2090.5px;transform-origin:0 0;top:2038.1px;font-size:33px;font-weight:bold;color:#000;transform:scaleX(0.9932);">Hoek-Brown Fit Advanced Controls</span>
<div class="a" style="left:0.0px;top:2049.0px;width:3013.0px;height:22.0px;background:#000;"></div>
<div class="a" style="left:874.5px;top:1435.8px;width:1279.0px;height:62.5px;background:#ffffe1;border:2px solid #1a1a1a;box-shadow:5px 5px 5px rgba(0,0,0,.35);"></div>
<span class="t" style="left:887.0px;transform-origin:0 0;top:1453.0px;font-size:34px;color:#000;transform:scaleX(0.9885);">σ3 max for calculating the Mohr-Coulomb parameters from Hoek-Brown parameters.</span>
<svg class="a" style="left:0;top:0" width="3013" height="2071" viewBox="0 0 3013 2071">
<polygon points="2051.2,538.9 779.2,749.8 776.0,730.3 720.3,770.5 786.0,790.5 782.7,771.0 2054.8,560.1" fill="#00b050"/>
<rect x="2053.9" y="505.4" width="914.7" height="82.9" fill="#00b050" fill-opacity="0.075" stroke="#00b050" stroke-width="6.8"/>
<polygon points="2054.3,1294.8 814.7,1026.7 818.9,1007.4 752.3,1024.2 806.0,1067.0 810.1,1047.7 2049.7,1315.8" fill="#e97132"/>
<polygon points="2048.3,1300.9 617.9,1818.5 611.2,1799.9 563.7,1849.5 631.9,1857.3 625.2,1838.7 2055.7,1321.1" fill="#e97132"/>
<rect x="2053.5" y="1241.5" width="916" height="138.5" fill="#ffff00" fill-opacity="0.1" stroke="#e97132" stroke-width="7"/>
<rect x="3.65" y="1766.4" width="557.7" height="174" fill="#ffff00" fill-opacity="0.1" stroke="#e97132" stroke-width="7.3"/>
<polygon points="2093.3,1534.6 385.2,1980.6 380.2,1961.5 328.4,2006.5 395.6,2020.5 390.6,2001.4 2098.7,1555.4" fill="#0000ff"/>
<rect x="2097" y="1407" width="758.5" height="277.5" fill="#0000ff" fill-opacity="0.1" stroke="#0000ff" stroke-width="7"/>
<rect x="3.65" y="1964.6" width="321.7" height="84.6" fill="#0000ff" fill-opacity="0.1" stroke="#0000ff" stroke-width="7.3"/>
</svg>
</body></html>
